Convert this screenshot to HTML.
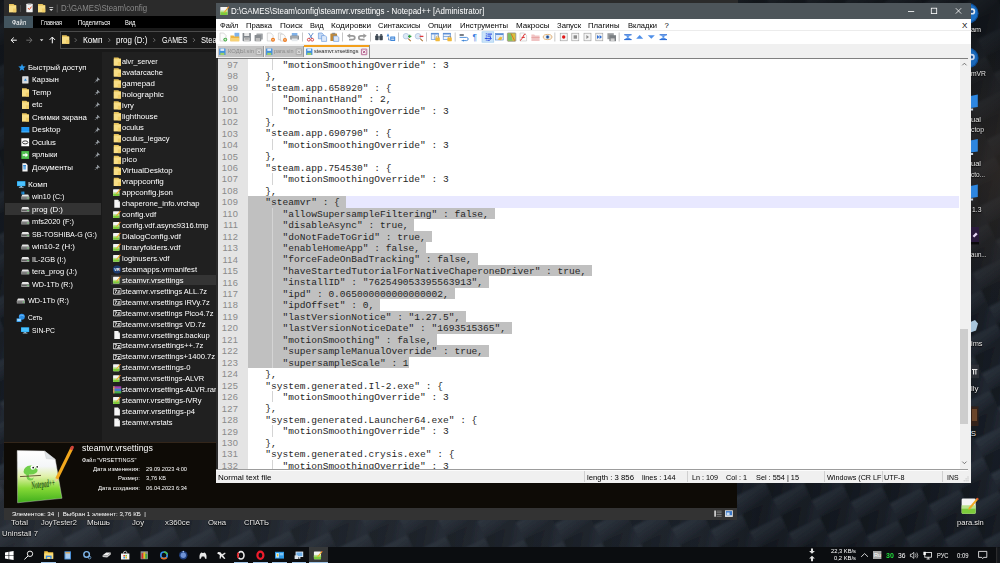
<!DOCTYPE html>
<html><head><meta charset="utf-8"><title>screenshot</title>
<style>
html,body{margin:0;padding:0;}
body{width:1000px;height:563px;overflow:hidden;position:relative;background:#1b2026;font-family:"Liberation Sans",sans-serif;}
.t{position:absolute;white-space:pre;margin:0;padding:0;}
.r{position:absolute;}
.m{font-family:"Liberation Mono",monospace;}
svg.ov{position:absolute;overflow:hidden;pointer-events:none;}
.sh{text-shadow:0 0 1.5px #000,0 0.6px 1px #000;}
</style></head><body>

<svg class="ov" width="1000" height="563" viewBox="0 0 1000 563" style="left:0;top:0;">
<defs>
<linearGradient id="dgA" x1="0" y1="0" x2="0.3" y2="1"><stop offset="0" stop-color="#303843"/><stop offset="0.6" stop-color="#252c36"/><stop offset="1" stop-color="#1c222a"/></linearGradient>
<linearGradient id="dgB" x1="0" y1="0" x2="1" y2="0.4"><stop offset="0" stop-color="#141920"/><stop offset="0.7" stop-color="#1b212a"/><stop offset="1" stop-color="#232a34"/></linearGradient>
<pattern id="weave" width="2" height="2" patternUnits="userSpaceOnUse" patternTransform="matrix(31,-15.5,8,17,3,2)">
<rect x="0" y="0" width="1" height="1" fill="url(#dgA)"/><rect x="1" y="1" width="1" height="1" fill="url(#dgA)"/>
<rect x="1" y="0" width="1" height="1" fill="url(#dgB)"/><rect x="0" y="1" width="1" height="1" fill="url(#dgB)"/>
</pattern>
<linearGradient id="dshade" x1="0" y1="0" x2="0" y2="1"><stop offset="0" stop-color="#0c0e10" stop-opacity="0.6"/><stop offset="0.35" stop-color="#0c0e10" stop-opacity="0.35"/><stop offset="0.8" stop-color="#0c0e10" stop-opacity="0.05"/><stop offset="1" stop-color="#0c0e10" stop-opacity="0.15"/></linearGradient>
<linearGradient id="dlite" x1="0" y1="0" x2="1" y2="0"><stop offset="0" stop-color="#4a4e55" stop-opacity="0.28"/><stop offset="0.7" stop-color="#3a4048" stop-opacity="0.12"/><stop offset="0.76" stop-color="#000" stop-opacity="0.12"/><stop offset="1" stop-color="#000" stop-opacity="0.05"/></linearGradient>
</defs>
<filter id="dblur" x="0" y="0" width="1" height="1"><feGaussianBlur stdDeviation="0.9"/></filter><rect x="-5" y="-5" width="1010" height="573" fill="url(#weave)" filter="url(#dblur)"/>
<rect width="1000" height="563" fill="url(#dshade)"/>
<rect y="480" width="1000" height="83" fill="url(#dlite)"/>
<radialGradient id="dbrown" cx="1" cy="0.36" r="0.3"><stop offset="0" stop-color="#3a3028" stop-opacity="0.55"/><stop offset="1" stop-color="#3a3028" stop-opacity="0"/></radialGradient><rect x="700" width="300" height="480" fill="url(#dbrown)"/>
</svg>

<div class="t sh" style="left:11px;top:518.32px;font-size:7.8px;line-height:9.36px;color:#e8e8e8;transform:scaleX(1.0318);transform-origin:0 0;">Total</div>
<div class="t sh" style="left:41px;top:518.32px;font-size:7.8px;line-height:9.36px;color:#e8e8e8;transform:scaleX(0.9545);transform-origin:0 0;">JoyTester2</div>
<div class="t sh" style="left:87px;top:518.32px;font-size:7.8px;line-height:9.36px;color:#e8e8e8;transform:scaleX(1.0256);transform-origin:0 0;">Мышь</div>
<div class="t sh" style="left:132px;top:518.32px;font-size:7.8px;line-height:9.36px;color:#e8e8e8;transform:scaleX(0.9886);transform-origin:0 0;">Joy</div>
<div class="t sh" style="left:165px;top:518.32px;font-size:7.8px;line-height:9.36px;color:#e8e8e8;transform:scaleX(0.9940);transform-origin:0 0;">x360ce</div>
<div class="t sh" style="left:208px;top:518.32px;font-size:7.8px;line-height:9.36px;color:#e8e8e8;transform:scaleX(0.9931);transform-origin:0 0;">Окна</div>
<div class="t sh" style="left:244px;top:518.32px;font-size:7.8px;line-height:9.36px;color:#e8e8e8;transform:scaleX(0.9722);transform-origin:0 0;">СПАТЬ</div>
<div class="t sh" style="left:2px;top:528.82px;font-size:7.8px;line-height:9.36px;color:#e8e8e8;transform:scaleX(0.9885);transform-origin:0 0;">Uninstall 7</div>
<div class="t sh" style="left:970.8px;top:25.22px;font-size:7.8px;line-height:9.36px;color:#e8e8e8;transform:scaleX(0.9229);transform-origin:0 0;">am</div>
<div class="t sh" style="left:970.8px;top:69.42px;font-size:7.8px;line-height:9.36px;color:#e8e8e8;transform:scaleX(0.8654);transform-origin:0 0;">mVR</div>
<div class="t sh" style="left:970.8px;top:115.42px;font-size:7.8px;line-height:9.36px;color:#e8e8e8;transform:scaleX(0.9607);transform-origin:0 0;">ual</div>
<div class="t sh" style="left:970.8px;top:125.22px;font-size:7.8px;line-height:9.36px;color:#e8e8e8;transform:scaleX(0.8818);transform-origin:0 0;">ctop</div>
<div class="t sh" style="left:970.8px;top:159.42px;font-size:7.8px;line-height:9.36px;color:#e8e8e8;transform:scaleX(0.9607);transform-origin:0 0;">ual</div>
<div class="t sh" style="left:970.8px;top:170.12px;font-size:7.8px;line-height:9.36px;color:#e8e8e8;transform:scaleX(0.8281);transform-origin:0 0;">cto...</div>
<div class="t sh" style="left:971.8px;top:204.52px;font-size:7.8px;line-height:9.36px;color:#e8e8e8;transform:scaleX(0.8669);transform-origin:0 0;">1.3</div>
<div class="t sh" style="left:970.8px;top:250.22px;font-size:7.8px;line-height:9.36px;color:#e8e8e8;transform:scaleX(0.7943);transform-origin:0 0;">aun...</div>
<div class="t sh" style="left:970.8px;top:338.72px;font-size:7.8px;line-height:9.36px;color:#e8e8e8;transform:scaleX(0.9480);transform-origin:0 0;">ims</div>
<div class="t sh" style="left:970.8px;top:383.52px;font-size:7.8px;line-height:9.36px;color:#e8e8e8;transform:scaleX(1.0182);transform-origin:0 0;">lly</div>
<div class="t sh" style="left:970.8px;top:428.62px;font-size:7.8px;line-height:9.36px;color:#e8e8e8;">S</div>
<div class="t sh" style="left:956.5px;top:517.82px;font-size:7.8px;line-height:9.36px;color:#f0f0f0;transform:scaleX(0.9658);transform-origin:0 0;">para.sin</div>
<svg class="ov" width="1000" height="563" viewBox="0 0 1000 563" style="left:0;top:0;"><circle cx="968.40" cy="13.20" r="10.20" fill="#0f4f96" /><circle cx="968.40" cy="13.20" r="9.00" fill="#1a6ec4" /><circle cx="972.00" cy="11.40" r="3.20" fill="#dfe8f2" /><circle cx="972.00" cy="11.40" r="1.50" fill="#1a4f95" /><circle cx="968.40" cy="58.00" r="10.20" fill="#0f4f96" /><circle cx="968.40" cy="58.00" r="9.00" fill="#1a68ba" /><circle cx="971.60" cy="57.00" r="3.20" fill="#c9d6ec" /><circle cx="971.60" cy="57.00" r="1.50" fill="#1a4f95" /><path d="M970.5,96 L977.8,94.5 L977.8,107 L970.5,108 Z" fill="#2d86e0" stroke="none" stroke-width="1" /><path d="M970.5,108.5 h2.6 v2 h-2.6 z" fill="#c8d4e0" stroke="none" stroke-width="1" /><path d="M970.5,140.5 L977.8,139.0 L977.8,151.5 L970.5,152.5 Z" fill="#2d86e0" stroke="none" stroke-width="1" /><path d="M970.5,153.0 h2.6 v2 h-2.6 z" fill="#c8d4e0" stroke="none" stroke-width="1" /><path d="M970.5,186 L977.8,184.5 L977.8,197 L970.5,198 Z" fill="#2d86e0" stroke="none" stroke-width="1" /><path d="M970.5,198.5 h2.6 v2 h-2.6 z" fill="#c8d4e0" stroke="none" stroke-width="1" /><rect x="970.50" y="227.00" width="8.50" height="15.00" fill="#2a1a3c" /><path d="M972.6,236 l3.4,-3.4 l1.6,1.6 l-3.4,3.4 z" fill="#e6d7f5" stroke="none" stroke-width="1" /><rect x="970.50" y="242.00" width="8.50" height="2.40" fill="#0a0a0a" /><path d="M970.5,322 l4.5,-2 l3,3.5 l-2,7 l-5.5,2 z" fill="#a9c6dc" stroke="none" stroke-width="1" /><rect x="970.50" y="364.60" width="8.50" height="13.60" fill="#2c2f36" /><path d="M972,369 h5.4 v1 h-1 v4.6 h-1.1 v-4.6 h-1.2 v4.6 h-1.1 v-4.6 h-1 z" fill="#e6e6e6" stroke="none" stroke-width="1" /><rect x="970.50" y="406.40" width="8.00" height="19.60" fill="#33221a" /><rect x="972.00" y="409.00" width="5.00" height="12.00" fill="#6a452a" /><g transform="translate(961.00,497.20) scale(2.125)"><rect x="0.30" y="0.60" width="6.60" height="7.20" fill="#f4f4f4" rx="0.6"/><rect x="0.30" y="4.60" width="6.60" height="3.20" fill="#7ccb3b" rx="0.5"/><rect x="0.30" y="3.80" width="6.60" height="1.60" fill="#b9e28c" /><path d="M7.6,0.2 L8.3,0.9 L4.4,5.6 L3.4,5.9 L3.7,4.9 Z" fill="#f0a822" stroke="none" stroke-width="1" /><path d="M7.6,0.2 L8.3,0.9 L7.9,1.4 L7.2,0.7 Z" fill="#d8473a" stroke="none" stroke-width="1" /></g></svg>
<div class="r" style="left:4px;top:0px;width:733.2px;height:519.5px;background:#191919;"></div>
<div class="r" style="left:4px;top:0px;width:734.2px;height:16.2px;background:#2b2b2b;"></div>
<div class="r" style="left:4px;top:16.2px;width:733.2px;height:12px;background:#000;"></div>
<div class="r" style="left:4px;top:16.2px;width:29px;height:12px;background:#42545e;"></div>
<div class="t " style="left:11.7px;top:18.66px;font-size:6.4px;line-height:7.68px;color:#fff;transform:scaleX(0.8898);transform-origin:0 0;">Файл</div>
<div class="t " style="left:41px;top:18.66px;font-size:6.4px;line-height:7.68px;color:#fff;transform:scaleX(0.8621);transform-origin:0 0;">Главная</div>
<div class="t " style="left:77.7px;top:18.66px;font-size:6.4px;line-height:7.68px;color:#fff;transform:scaleX(0.9140);transform-origin:0 0;">Поделиться</div>
<div class="t " style="left:125px;top:18.66px;font-size:6.4px;line-height:7.68px;color:#fff;transform:scaleX(0.9069);transform-origin:0 0;">Вид</div>
<div class="t " style="left:61.3px;top:2.90px;font-size:9.0px;line-height:10.80px;color:#8a8a8a;transform:scaleX(0.8684);transform-origin:0 0;">D:\GAMES\Steam\config</div>
<div class="r" style="left:59.5px;top:31.3px;width:700px;height:17.4px;background:#191919;border:0.9px solid #4a4a4a;box-sizing:border-box;"></div>
<div class="t " style="left:82.5px;top:34.96px;font-size:8.4px;line-height:10.08px;color:#fff;transform:scaleX(0.9805);transform-origin:0 0;">Комп</div>
<div class="t " style="left:116px;top:34.96px;font-size:8.4px;line-height:10.08px;color:#fff;transform:scaleX(0.9505);transform-origin:0 0;">prog (D:)</div>
<div class="t " style="left:161.5px;top:34.96px;font-size:8.4px;line-height:10.08px;color:#fff;transform:scaleX(0.8405);transform-origin:0 0;">GAMES</div>
<div class="t " style="left:200.8px;top:34.96px;font-size:8.4px;line-height:10.08px;color:#fff;transform:scaleX(0.9062);transform-origin:0 0;">Steam</div>
<div class="r" style="left:102.3px;top:52.3px;width:640px;height:390px;background:#202020;"></div>
<div class="r" style="left:4.5px;top:203.2px;width:96.5px;height:12px;background:#333;"></div>
<div class="t " style="left:27.5px;top:62.76px;font-size:7.9px;line-height:9.48px;color:#fff;transform:scaleX(0.9750);transform-origin:0 0;">Быстрый доступ</div>
<div class="t " style="left:32px;top:75.26px;font-size:7.9px;line-height:9.48px;color:#fff;transform:scaleX(1.0014);transform-origin:0 0;">Карзын</div>
<div class="t " style="left:32px;top:87.76px;font-size:7.9px;line-height:9.48px;color:#fff;transform:scaleX(0.9835);transform-origin:0 0;">Temp</div>
<div class="t " style="left:32px;top:100.26px;font-size:7.9px;line-height:9.48px;color:#fff;transform:scaleX(0.9963);transform-origin:0 0;">etc</div>
<div class="t " style="left:32px;top:112.76px;font-size:7.9px;line-height:9.48px;color:#fff;transform:scaleX(0.9999);transform-origin:0 0;">Снимки экрана</div>
<div class="t " style="left:32px;top:125.26px;font-size:7.9px;line-height:9.48px;color:#fff;transform:scaleX(0.9834);transform-origin:0 0;">Desktop</div>
<div class="t " style="left:32px;top:137.76px;font-size:7.9px;line-height:9.48px;color:#fff;transform:scaleX(0.9761);transform-origin:0 0;">Oculus</div>
<div class="t " style="left:32px;top:150.26px;font-size:7.9px;line-height:9.48px;color:#fff;transform:scaleX(0.9601);transform-origin:0 0;">ярлыки</div>
<div class="t " style="left:32px;top:162.76px;font-size:7.9px;line-height:9.48px;color:#fff;transform:scaleX(1.0068);transform-origin:0 0;">Документы</div>
<div class="t " style="left:27.5px;top:179.76px;font-size:7.9px;line-height:9.48px;color:#fff;transform:scaleX(1.0425);transform-origin:0 0;">Комп</div>
<div class="t " style="left:32px;top:192.26px;font-size:7.9px;line-height:9.48px;color:#fff;transform:scaleX(0.9028);transform-origin:0 0;">win10 (C:)</div>
<div class="t " style="left:32px;top:204.76px;font-size:7.9px;line-height:9.48px;color:#fff;transform:scaleX(0.9946);transform-origin:0 0;">prog (D:)</div>
<div class="t " style="left:32px;top:217.26px;font-size:7.9px;line-height:9.48px;color:#fff;transform:scaleX(0.9380);transform-origin:0 0;">mfs2020 (F:)</div>
<div class="t " style="left:32px;top:229.76px;font-size:7.9px;line-height:9.48px;color:#fff;transform:scaleX(0.8993);transform-origin:0 0;">SB-TOSHIBA-G (G:)</div>
<div class="t " style="left:32px;top:242.26px;font-size:7.9px;line-height:9.48px;color:#fff;transform:scaleX(0.9995);transform-origin:0 0;">win10-2 (H:)</div>
<div class="t " style="left:32px;top:254.76px;font-size:7.9px;line-height:9.48px;color:#fff;transform:scaleX(0.9221);transform-origin:0 0;">IL-2GB (I:)</div>
<div class="t " style="left:32px;top:267.26px;font-size:7.9px;line-height:9.48px;color:#fff;transform:scaleX(0.9490);transform-origin:0 0;">tera_prog (J:)</div>
<div class="t " style="left:32px;top:279.76px;font-size:7.9px;line-height:9.48px;color:#fff;transform:scaleX(0.9160);transform-origin:0 0;">WD-1Tb (R:)</div>
<div class="t " style="left:27.5px;top:296.26px;font-size:7.9px;line-height:9.48px;color:#fff;transform:scaleX(0.9160);transform-origin:0 0;">WD-1Tb (R:)</div>
<div class="t " style="left:27.5px;top:313.26px;font-size:7.9px;line-height:9.48px;color:#fff;transform:scaleX(0.8252);transform-origin:0 0;">Сеть</div>
<div class="t " style="left:32px;top:325.76px;font-size:7.9px;line-height:9.48px;color:#fff;transform:scaleX(0.8590);transform-origin:0 0;">SIN-PC</div>
<div class="r" style="left:111.3px;top:275.1px;width:110px;height:10.4px;background:#343434;"></div>
<div class="t " style="left:122.4px;top:57.02px;font-size:7.8px;line-height:9.36px;color:#fff;transform:scaleX(0.9228);transform-origin:0 0;">alvr_server</div>
<div class="t " style="left:122.4px;top:67.96px;font-size:7.8px;line-height:9.36px;color:#fff;transform:scaleX(0.9649);transform-origin:0 0;">avatarcache</div>
<div class="t " style="left:122.4px;top:78.90px;font-size:7.8px;line-height:9.36px;color:#fff;transform:scaleX(1.0084);transform-origin:0 0;">gamepad</div>
<div class="t " style="left:122.4px;top:89.84px;font-size:7.8px;line-height:9.36px;color:#fff;transform:scaleX(1.0365);transform-origin:0 0;">holographic</div>
<div class="t " style="left:122.4px;top:100.78px;font-size:7.8px;line-height:9.36px;color:#fff;transform:scaleX(0.9810);transform-origin:0 0;">ivry</div>
<div class="t " style="left:122.4px;top:111.72px;font-size:7.8px;line-height:9.36px;color:#fff;transform:scaleX(1.0067);transform-origin:0 0;">lighthouse</div>
<div class="t " style="left:122.4px;top:122.66px;font-size:7.8px;line-height:9.36px;color:#fff;transform:scaleX(0.9713);transform-origin:0 0;">oculus</div>
<div class="t " style="left:122.4px;top:133.60px;font-size:7.8px;line-height:9.36px;color:#fff;transform:scaleX(0.9609);transform-origin:0 0;">oculus_legacy</div>
<div class="t " style="left:122.4px;top:144.54px;font-size:7.8px;line-height:9.36px;color:#fff;transform:scaleX(1.0021);transform-origin:0 0;">openxr</div>
<div class="t " style="left:122.4px;top:155.48px;font-size:7.8px;line-height:9.36px;color:#fff;transform:scaleX(1.0413);transform-origin:0 0;">pico</div>
<div class="t " style="left:122.4px;top:166.42px;font-size:7.8px;line-height:9.36px;color:#fff;transform:scaleX(1.0023);transform-origin:0 0;">VirtualDesktop</div>
<div class="t " style="left:122.4px;top:177.36px;font-size:7.8px;line-height:9.36px;color:#fff;transform:scaleX(1.0366);transform-origin:0 0;">vrappconfig</div>
<div class="t " style="left:122.4px;top:188.30px;font-size:7.8px;line-height:9.36px;color:#fff;transform:scaleX(1.0138);transform-origin:0 0;">appconfig.json</div>
<div class="t " style="left:122.4px;top:199.24px;font-size:7.8px;line-height:9.36px;color:#fff;transform:scaleX(0.9779);transform-origin:0 0;">chaperone_info.vrchap</div>
<div class="t " style="left:122.4px;top:210.18px;font-size:7.8px;line-height:9.36px;color:#fff;transform:scaleX(1.0274);transform-origin:0 0;">config.vdf</div>
<div class="t " style="left:122.4px;top:221.12px;font-size:7.8px;line-height:9.36px;color:#fff;transform:scaleX(0.9791);transform-origin:0 0;">config.vdf.async9316.tmp</div>
<div class="t " style="left:122.4px;top:232.06px;font-size:7.8px;line-height:9.36px;color:#fff;transform:scaleX(1.0291);transform-origin:0 0;">DialogConfig.vdf</div>
<div class="t " style="left:122.4px;top:243.00px;font-size:7.8px;line-height:9.36px;color:#fff;transform:scaleX(1.0206);transform-origin:0 0;">libraryfolders.vdf</div>
<div class="t " style="left:122.4px;top:253.94px;font-size:7.8px;line-height:9.36px;color:#fff;transform:scaleX(0.9870);transform-origin:0 0;">loginusers.vdf</div>
<div class="t " style="left:122.4px;top:264.88px;font-size:7.8px;line-height:9.36px;color:#fff;transform:scaleX(0.9843);transform-origin:0 0;">steamapps.vrmanifest</div>
<div class="t " style="left:122.4px;top:275.82px;font-size:7.8px;line-height:9.36px;color:#fff;transform:scaleX(0.9816);transform-origin:0 0;">steamvr.vrsettings</div>
<div class="t " style="left:122.4px;top:286.76px;font-size:7.8px;line-height:9.36px;color:#fff;transform:scaleX(0.9575);transform-origin:0 0;">steamvr.vrsettings ALL.7z</div>
<div class="t " style="left:122.4px;top:297.70px;font-size:7.8px;line-height:9.36px;color:#fff;transform:scaleX(0.9661);transform-origin:0 0;">steamvr.vrsettings iRVy.7z</div>
<div class="t " style="left:122.4px;top:308.64px;font-size:7.8px;line-height:9.36px;color:#fff;transform:scaleX(0.9638);transform-origin:0 0;">steamvr.vrsettings Pico4.7z</div>
<div class="t " style="left:122.4px;top:319.58px;font-size:7.8px;line-height:9.36px;color:#fff;transform:scaleX(0.9680);transform-origin:0 0;">steamvr.vrsettings VD.7z</div>
<div class="t " style="left:122.4px;top:330.52px;font-size:7.8px;line-height:9.36px;color:#fff;transform:scaleX(0.9737);transform-origin:0 0;">steamvr.vrsettings.backup</div>
<div class="t " style="left:122.4px;top:341.46px;font-size:7.8px;line-height:9.36px;color:#fff;transform:scaleX(0.9882);transform-origin:0 0;">steamvr.vrsettings++.7z</div>
<div class="t " style="left:122.4px;top:352.40px;font-size:7.8px;line-height:9.36px;color:#fff;transform:scaleX(0.9793);transform-origin:0 0;">steamvr.vrsettings+1400.7z</div>
<div class="t " style="left:122.4px;top:363.34px;font-size:7.8px;line-height:9.36px;color:#fff;transform:scaleX(0.9830);transform-origin:0 0;">steamvr.vrsettings-0</div>
<div class="t " style="left:122.4px;top:374.28px;font-size:7.8px;line-height:9.36px;color:#fff;transform:scaleX(0.9631);transform-origin:0 0;">steamvr.vrsettings-ALVR</div>
<div class="t " style="left:122.4px;top:385.22px;font-size:7.8px;line-height:9.36px;color:#fff;transform:scaleX(0.9747);transform-origin:0 0;">steamvr.vrsettings-ALVR.rar</div>
<div class="t " style="left:122.4px;top:396.16px;font-size:7.8px;line-height:9.36px;color:#fff;transform:scaleX(0.9705);transform-origin:0 0;">steamvr.vrsettings-iVRy</div>
<div class="t " style="left:122.4px;top:407.10px;font-size:7.8px;line-height:9.36px;color:#fff;transform:scaleX(0.9861);transform-origin:0 0;">steamvr.vrsettings-p4</div>
<div class="t " style="left:122.4px;top:418.04px;font-size:7.8px;line-height:9.36px;color:#fff;transform:scaleX(0.9629);transform-origin:0 0;">steamvr.vrstats</div>
<div class="r" style="left:4px;top:442.3px;width:733.2px;height:66.2px;background:#0e0b06;"></div>
<div class="r" style="left:4px;top:442.3px;width:733.2px;height:0.8px;background:#33261a;"></div>
<div class="r" style="left:4px;top:507.5px;width:733.2px;height:12px;background:#333333;"></div>
<div class="t " style="left:82px;top:442.36px;font-size:9.4px;line-height:11.28px;color:#fff;transform:scaleX(0.9373);transform-origin:0 0;">steamvr.vrsettings</div>
<div class="t " style="left:82px;top:455.54px;font-size:6.1px;line-height:7.32px;color:#fff;transform:scaleX(0.9083);transform-origin:0 0;">Файл "VRSETTINGS"</div>
<div class="t " style="left:93px;top:464.94px;font-size:6.1px;line-height:7.32px;color:#fff;transform:scaleX(0.9889);transform-origin:0 0;">Дата изменения:</div>
<div class="t " style="left:146px;top:464.94px;font-size:6.1px;line-height:7.32px;color:#fff;transform:scaleX(0.9298);transform-origin:0 0;">29.09.2023 4:00</div>
<div class="t " style="left:118px;top:474.34px;font-size:6.1px;line-height:7.32px;color:#fff;transform:scaleX(0.9708);transform-origin:0 0;">Размер:</div>
<div class="t " style="left:146px;top:474.34px;font-size:6.1px;line-height:7.32px;color:#fff;transform:scaleX(0.9468);transform-origin:0 0;">3,76 КБ</div>
<div class="t " style="left:98px;top:483.94px;font-size:6.1px;line-height:7.32px;color:#fff;transform:scaleX(0.9760);transform-origin:0 0;">Дата создания:</div>
<div class="t " style="left:146px;top:483.94px;font-size:6.1px;line-height:7.32px;color:#fff;transform:scaleX(0.9298);transform-origin:0 0;">06.04.2023 6:34</div>
<div class="t " style="left:11.5px;top:510.04px;font-size:6.1px;line-height:7.32px;color:#fff;transform:scaleX(1.0149);transform-origin:0 0;">Элементов: 34  |  Выбран 1 элемент: 3,76 КБ  |</div>
<svg class="ov" width="1000" height="563" viewBox="0 0 1000 563" style="left:0;top:0;"><g transform="translate(9.00,4.00) scale(1)"><path d="M0,0 H4.464 L5.6160000000000005,0.9839999999999999 H7.2 V8.2 H0 Z" fill="#e8c45c" stroke="none" stroke-width="1" /><path d="M0,1.64 H7.2 V8.2 H0 Z" fill="#f8de86" stroke="none" stroke-width="1" /><path d="M3.9600000000000004,4.51 H7.2 V8.2 H3.9600000000000004 Z" fill="#f1cf6a" stroke="none" stroke-width="1" /></g><rect x="20.00" y="5.00" width="0.70" height="7.00" fill="#555" /><rect x="26.30" y="3.80" width="6.40" height="8.40" fill="#f2f2f2" rx="0.5"/><path d="M28,8 l1.3,1.6 l2.2,-3" fill="none" stroke="#e2552e" stroke-width="1.0" /><rect x="27.80" y="3.30" width="3.40" height="1.20" fill="#8a8a8a" /><g transform="translate(38.00,4.00) scale(1)"><path d="M0,0 H4.464 L5.6160000000000005,0.9839999999999999 H7.2 V8.2 H0 Z" fill="#e8c45c" stroke="none" stroke-width="1" /><path d="M0,1.64 H7.2 V8.2 H0 Z" fill="#f8de86" stroke="none" stroke-width="1" /><path d="M3.9600000000000004,4.51 H7.2 V8.2 H3.9600000000000004 Z" fill="#f1cf6a" stroke="none" stroke-width="1" /></g><rect x="49.20" y="7.20" width="4.00" height="0.80" fill="#ddd" /><path d="M49.2,9 h4 l-2,2 z" fill="#ddd" stroke="none" stroke-width="1" /><rect x="56.80" y="4.50" width="0.70" height="8.00" fill="#666" /><path d="M16.8,40.2 H11.2 M13.8,37.5 L11.1,40.2 L13.8,42.9" fill="none" stroke="#fff" stroke-width="1.0" /><path d="M26.3,40.2 H31.9 M29.3,37.5 L32,40.2 L29.3,42.9" fill="none" stroke="#6f6f6f" stroke-width="1.0" /><path d="M39.8,39.3 h3.6 l-1.8,1.9 z" fill="#ddd" stroke="none" stroke-width="1" /><path d="M52.3,43.3 V37.2 M49.6,39.9 L52.3,37.1 L55,39.9" fill="none" stroke="#fff" stroke-width="1.0" /><g transform="translate(62.00,35.30) scale(1)"><path d="M0,0 H4.464 L5.6160000000000005,1.008 H7.2 V8.4 H0 Z" fill="#e8c45c" stroke="none" stroke-width="1" /><path d="M0,1.6800000000000002 H7.2 V8.4 H0 Z" fill="#f8de86" stroke="none" stroke-width="1" /><path d="M3.9600000000000004,4.620000000000001 H7.2 V8.4 H3.9600000000000004 Z" fill="#f1cf6a" stroke="none" stroke-width="1" /></g><path d="M74.7,38.2 l1.9,1.9 l-1.9,1.9" fill="none" stroke="#8d8d8d" stroke-width="0.7" /><path d="M108.3,38.2 l1.9,1.9 l-1.9,1.9" fill="none" stroke="#8d8d8d" stroke-width="0.7" /><path d="M153.3,38.2 l1.9,1.9 l-1.9,1.9" fill="none" stroke="#8d8d8d" stroke-width="0.7" /><path d="M193,38.2 l1.9,1.9 l-1.9,1.9" fill="none" stroke="#8d8d8d" stroke-width="0.7" /><g transform="translate(18.00,63.70) scale(1)"><polygon points="4.00,0.10 5.00,2.62 7.71,2.79 5.62,4.53 6.29,7.16 4.00,5.70 1.71,7.16 2.38,4.53 0.29,2.79 3.00,2.62" fill="#2b9bf1"/></g><rect x="22.20" y="76.20" width="6.30" height="7.40" fill="#e9e9e9" rx="0.6"/><rect x="23.20" y="77.20" width="4.30" height="5.40" fill="#cfd6dc" /><path d="M24,80.8 l1.4,-2.2 l1.4,2.2 z" fill="#2b86d9" stroke="none" stroke-width="1" /><g transform="translate(22.00,88.20) scale(1)"><path d="M0,0 H4.34 L5.46,0.9839999999999999 H7 V8.2 H0 Z" fill="#e8c45c" stroke="none" stroke-width="1" /><path d="M0,1.64 H7 V8.2 H0 Z" fill="#f8de86" stroke="none" stroke-width="1" /><path d="M3.8500000000000005,4.51 H7 V8.2 H3.8500000000000005 Z" fill="#f1cf6a" stroke="none" stroke-width="1" /></g><g transform="translate(22.00,100.70) scale(1)"><path d="M0,0 H4.34 L5.46,0.9839999999999999 H7 V8.2 H0 Z" fill="#e8c45c" stroke="none" stroke-width="1" /><path d="M0,1.64 H7 V8.2 H0 Z" fill="#f8de86" stroke="none" stroke-width="1" /><path d="M3.8500000000000005,4.51 H7 V8.2 H3.8500000000000005 Z" fill="#f1cf6a" stroke="none" stroke-width="1" /></g><g transform="translate(22.00,113.20) scale(1)"><path d="M0,0 H4.34 L5.46,0.9839999999999999 H7 V8.2 H0 Z" fill="#e8c45c" stroke="none" stroke-width="1" /><path d="M0,1.64 H7 V8.2 H0 Z" fill="#f8de86" stroke="none" stroke-width="1" /><path d="M3.8500000000000005,4.51 H7 V8.2 H3.8500000000000005 Z" fill="#f1cf6a" stroke="none" stroke-width="1" /></g><rect x="21.30" y="127.00" width="8.00" height="5.20" fill="#1e97f3" /><rect x="21.30" y="131.60" width="8.00" height="0.80" fill="#5cc0ff" /><rect x="21.30" y="138.30" width="7.80" height="8.00" fill="#fff" rx="0.4"/><ellipse cx="25.2" cy="142.4" rx="2.7" ry="1.5" fill="none" stroke="#222" stroke-width="0.9"/><rect x="21.30" y="151.00" width="7.80" height="8.00" fill="#3fae3f" rx="0.5"/><rect x="21.90" y="151.60" width="6.60" height="6.80" fill="#52c152" /><path d="M22.7,154.3 h2.8 v-1.5 l2.6,2.2 l-2.6,2.2 v-1.5 h-2.8 z" fill="#fff" stroke="none" stroke-width="1" /><path d="M22.4,163.3 h3.6 l1.6,1.6 v6.6 h-5.2 z" fill="#f4f4f4" stroke="none" stroke-width="1" /><rect x="23.30" y="165.00" width="2.60" height="4.50" fill="#6fb2e8" /><rect x="23.30" y="165.00" width="2.60" height="1.20" fill="#2f86d4" /><g transform="translate(17.00,181.20) scale(1)"><rect x="0.00" y="0.00" width="8.40" height="4.91" fill="#28a8f2" /><rect x="0.50" y="0.50" width="7.40" height="3.91" fill="#4cc3ff" /><rect x="3.36" y="4.91" width="1.68" height="0.88" fill="#9ad7ff" /><rect x="1.85" y="5.67" width="4.70" height="0.76" fill="#bfe4fb" /></g><g transform="translate(21.20,194.60) scale(1)"><path d="M1.2,0 H7 L8.2,2.2 H0 Z" fill="#e4e4e4" stroke="none" stroke-width="1" /><rect x="0.00" y="2.20" width="8.20" height="2.60" fill="#9a9a9a" rx="0.5"/><rect x="0.60" y="3.00" width="5.00" height="0.90" fill="#5a5a5a" /><rect x="6.30" y="3.00" width="1.10" height="0.90" fill="#3fd24a" /><rect x="0.20" y="-3.00" width="1.40" height="1.30" fill="#1f9cf0" /><rect x="1.80" y="-3.00" width="1.40" height="1.30" fill="#1f9cf0" /><rect x="0.20" y="-1.50" width="1.40" height="1.30" fill="#1f9cf0" /><rect x="1.80" y="-1.50" width="1.40" height="1.30" fill="#1f9cf0" /></g><g transform="translate(21.20,207.10) scale(1)"><path d="M1.2,0 H7 L8.2,2.2 H0 Z" fill="#e4e4e4" stroke="none" stroke-width="1" /><rect x="0.00" y="2.20" width="8.20" height="2.60" fill="#9a9a9a" rx="0.5"/><rect x="0.60" y="3.00" width="5.00" height="0.90" fill="#5a5a5a" /><rect x="6.30" y="3.00" width="1.10" height="0.90" fill="#3fd24a" /></g><g transform="translate(21.20,219.60) scale(1)"><path d="M1.2,0 H7 L8.2,2.2 H0 Z" fill="#e4e4e4" stroke="none" stroke-width="1" /><rect x="0.00" y="2.20" width="8.20" height="2.60" fill="#9a9a9a" rx="0.5"/><rect x="0.60" y="3.00" width="5.00" height="0.90" fill="#5a5a5a" /><rect x="6.30" y="3.00" width="1.10" height="0.90" fill="#3fd24a" /></g><g transform="translate(21.20,232.10) scale(1)"><path d="M1.2,0 H7 L8.2,2.2 H0 Z" fill="#e4e4e4" stroke="none" stroke-width="1" /><rect x="0.00" y="2.20" width="8.20" height="2.60" fill="#9a9a9a" rx="0.5"/><rect x="0.60" y="3.00" width="5.00" height="0.90" fill="#5a5a5a" /><rect x="6.30" y="3.00" width="1.10" height="0.90" fill="#3fd24a" /></g><g transform="translate(21.20,244.60) scale(1)"><path d="M1.2,0 H7 L8.2,2.2 H0 Z" fill="#e4e4e4" stroke="none" stroke-width="1" /><rect x="0.00" y="2.20" width="8.20" height="2.60" fill="#9a9a9a" rx="0.5"/><rect x="0.60" y="3.00" width="5.00" height="0.90" fill="#5a5a5a" /><rect x="6.30" y="3.00" width="1.10" height="0.90" fill="#3fd24a" /></g><g transform="translate(21.20,257.10) scale(1)"><path d="M1.2,0 H7 L8.2,2.2 H0 Z" fill="#e4e4e4" stroke="none" stroke-width="1" /><rect x="0.00" y="2.20" width="8.20" height="2.60" fill="#9a9a9a" rx="0.5"/><rect x="0.60" y="3.00" width="5.00" height="0.90" fill="#5a5a5a" /><rect x="6.30" y="3.00" width="1.10" height="0.90" fill="#3fd24a" /></g><g transform="translate(21.20,269.60) scale(1)"><path d="M1.2,0 H7 L8.2,2.2 H0 Z" fill="#e4e4e4" stroke="none" stroke-width="1" /><rect x="0.00" y="2.20" width="8.20" height="2.60" fill="#9a9a9a" rx="0.5"/><rect x="0.60" y="3.00" width="5.00" height="0.90" fill="#5a5a5a" /><rect x="6.30" y="3.00" width="1.10" height="0.90" fill="#3fd24a" /></g><g transform="translate(21.20,282.10) scale(1)"><path d="M1.2,0 H7 L8.2,2.2 H0 Z" fill="#e4e4e4" stroke="none" stroke-width="1" /><rect x="0.00" y="2.20" width="8.20" height="2.60" fill="#9a9a9a" rx="0.5"/><rect x="0.60" y="3.00" width="5.00" height="0.90" fill="#5a5a5a" /><rect x="6.30" y="3.00" width="1.10" height="0.90" fill="#3fd24a" /></g><g transform="translate(16.80,298.60) scale(1)"><path d="M1.2,0 H7 L8.2,2.2 H0 Z" fill="#e4e4e4" stroke="none" stroke-width="1" /><rect x="0.00" y="2.20" width="8.20" height="2.60" fill="#9a9a9a" rx="0.5"/><rect x="0.60" y="3.00" width="5.00" height="0.90" fill="#5a5a5a" /><rect x="6.30" y="3.00" width="1.10" height="0.90" fill="#3fd24a" /></g><circle cx="21.80" cy="316.80" r="3.00" fill="#2b8fe6" /><path d="M19.2,316.2 q2.6,-2 5.2,0" fill="none" stroke="#8fd0ff" stroke-width="0.6" /><rect x="16.60" y="318.40" width="4.80" height="3.60" fill="#3aa0ee" /><rect x="17.20" y="318.90" width="3.60" height="2.10" fill="#9ad7ff" /><g transform="translate(21.00,327.30) scale(1)"><rect x="0.00" y="0.00" width="8.20" height="4.68" fill="#28a8f2" /><rect x="0.50" y="0.50" width="7.20" height="3.68" fill="#4cc3ff" /><rect x="3.28" y="4.68" width="1.64" height="0.84" fill="#9ad7ff" /><rect x="1.80" y="5.40" width="4.59" height="0.72" fill="#bfe4fb" /></g><g transform="translate(94.80,77.30) scale(1)"><path d="M2.6,0 L5.2,2.6 L4.4,3.0 L3.6,2.7 L2.6,3.9 L2.9,4.9 L0.3,2.3 L1.3,2.6 L2.5,1.6 L2.2,0.8 Z" fill="#9aa0a6" stroke="none" stroke-width="1" /><path d="M1.5,3.7 L0,5.2" fill="none" stroke="#9aa0a6" stroke-width="0.6" /></g><g transform="translate(94.80,89.80) scale(1)"><path d="M2.6,0 L5.2,2.6 L4.4,3.0 L3.6,2.7 L2.6,3.9 L2.9,4.9 L0.3,2.3 L1.3,2.6 L2.5,1.6 L2.2,0.8 Z" fill="#9aa0a6" stroke="none" stroke-width="1" /><path d="M1.5,3.7 L0,5.2" fill="none" stroke="#9aa0a6" stroke-width="0.6" /></g><g transform="translate(94.80,102.30) scale(1)"><path d="M2.6,0 L5.2,2.6 L4.4,3.0 L3.6,2.7 L2.6,3.9 L2.9,4.9 L0.3,2.3 L1.3,2.6 L2.5,1.6 L2.2,0.8 Z" fill="#9aa0a6" stroke="none" stroke-width="1" /><path d="M1.5,3.7 L0,5.2" fill="none" stroke="#9aa0a6" stroke-width="0.6" /></g><g transform="translate(94.80,114.80) scale(1)"><path d="M2.6,0 L5.2,2.6 L4.4,3.0 L3.6,2.7 L2.6,3.9 L2.9,4.9 L0.3,2.3 L1.3,2.6 L2.5,1.6 L2.2,0.8 Z" fill="#9aa0a6" stroke="none" stroke-width="1" /><path d="M1.5,3.7 L0,5.2" fill="none" stroke="#9aa0a6" stroke-width="0.6" /></g><g transform="translate(94.80,127.30) scale(1)"><path d="M2.6,0 L5.2,2.6 L4.4,3.0 L3.6,2.7 L2.6,3.9 L2.9,4.9 L0.3,2.3 L1.3,2.6 L2.5,1.6 L2.2,0.8 Z" fill="#9aa0a6" stroke="none" stroke-width="1" /><path d="M1.5,3.7 L0,5.2" fill="none" stroke="#9aa0a6" stroke-width="0.6" /></g><g transform="translate(94.80,139.80) scale(1)"><path d="M2.6,0 L5.2,2.6 L4.4,3.0 L3.6,2.7 L2.6,3.9 L2.9,4.9 L0.3,2.3 L1.3,2.6 L2.5,1.6 L2.2,0.8 Z" fill="#9aa0a6" stroke="none" stroke-width="1" /><path d="M1.5,3.7 L0,5.2" fill="none" stroke="#9aa0a6" stroke-width="0.6" /></g><g transform="translate(94.80,152.30) scale(1)"><path d="M2.6,0 L5.2,2.6 L4.4,3.0 L3.6,2.7 L2.6,3.9 L2.9,4.9 L0.3,2.3 L1.3,2.6 L2.5,1.6 L2.2,0.8 Z" fill="#9aa0a6" stroke="none" stroke-width="1" /><path d="M1.5,3.7 L0,5.2" fill="none" stroke="#9aa0a6" stroke-width="0.6" /></g><g transform="translate(94.80,164.80) scale(1)"><path d="M2.6,0 L5.2,2.6 L4.4,3.0 L3.6,2.7 L2.6,3.9 L2.9,4.9 L0.3,2.3 L1.3,2.6 L2.5,1.6 L2.2,0.8 Z" fill="#9aa0a6" stroke="none" stroke-width="1" /><path d="M1.5,3.7 L0,5.2" fill="none" stroke="#9aa0a6" stroke-width="0.6" /></g><g transform="translate(113.80,57.40) scale(1)"><path d="M0,0 H4.464 L5.6160000000000005,0.9839999999999999 H7.2 V8.2 H0 Z" fill="#e8c45c" stroke="none" stroke-width="1" /><path d="M0,1.64 H7.2 V8.2 H0 Z" fill="#f8de86" stroke="none" stroke-width="1" /><path d="M3.9600000000000004,4.51 H7.2 V8.2 H3.9600000000000004 Z" fill="#f1cf6a" stroke="none" stroke-width="1" /></g><g transform="translate(113.80,68.34) scale(1)"><path d="M0,0 H4.464 L5.6160000000000005,0.9839999999999999 H7.2 V8.2 H0 Z" fill="#e8c45c" stroke="none" stroke-width="1" /><path d="M0,1.64 H7.2 V8.2 H0 Z" fill="#f8de86" stroke="none" stroke-width="1" /><path d="M3.9600000000000004,4.51 H7.2 V8.2 H3.9600000000000004 Z" fill="#f1cf6a" stroke="none" stroke-width="1" /></g><g transform="translate(113.80,79.28) scale(1)"><path d="M0,0 H4.464 L5.6160000000000005,0.9839999999999999 H7.2 V8.2 H0 Z" fill="#e8c45c" stroke="none" stroke-width="1" /><path d="M0,1.64 H7.2 V8.2 H0 Z" fill="#f8de86" stroke="none" stroke-width="1" /><path d="M3.9600000000000004,4.51 H7.2 V8.2 H3.9600000000000004 Z" fill="#f1cf6a" stroke="none" stroke-width="1" /></g><g transform="translate(113.80,90.22) scale(1)"><path d="M0,0 H4.464 L5.6160000000000005,0.9839999999999999 H7.2 V8.2 H0 Z" fill="#e8c45c" stroke="none" stroke-width="1" /><path d="M0,1.64 H7.2 V8.2 H0 Z" fill="#f8de86" stroke="none" stroke-width="1" /><path d="M3.9600000000000004,4.51 H7.2 V8.2 H3.9600000000000004 Z" fill="#f1cf6a" stroke="none" stroke-width="1" /></g><g transform="translate(113.80,101.16) scale(1)"><path d="M0,0 H4.464 L5.6160000000000005,0.9839999999999999 H7.2 V8.2 H0 Z" fill="#e8c45c" stroke="none" stroke-width="1" /><path d="M0,1.64 H7.2 V8.2 H0 Z" fill="#f8de86" stroke="none" stroke-width="1" /><path d="M3.9600000000000004,4.51 H7.2 V8.2 H3.9600000000000004 Z" fill="#f1cf6a" stroke="none" stroke-width="1" /></g><g transform="translate(113.80,112.10) scale(1)"><path d="M0,0 H4.464 L5.6160000000000005,0.9839999999999999 H7.2 V8.2 H0 Z" fill="#e8c45c" stroke="none" stroke-width="1" /><path d="M0,1.64 H7.2 V8.2 H0 Z" fill="#f8de86" stroke="none" stroke-width="1" /><path d="M3.9600000000000004,4.51 H7.2 V8.2 H3.9600000000000004 Z" fill="#f1cf6a" stroke="none" stroke-width="1" /></g><g transform="translate(113.80,123.04) scale(1)"><path d="M0,0 H4.464 L5.6160000000000005,0.9839999999999999 H7.2 V8.2 H0 Z" fill="#e8c45c" stroke="none" stroke-width="1" /><path d="M0,1.64 H7.2 V8.2 H0 Z" fill="#f8de86" stroke="none" stroke-width="1" /><path d="M3.9600000000000004,4.51 H7.2 V8.2 H3.9600000000000004 Z" fill="#f1cf6a" stroke="none" stroke-width="1" /></g><g transform="translate(113.80,133.98) scale(1)"><path d="M0,0 H4.464 L5.6160000000000005,0.9839999999999999 H7.2 V8.2 H0 Z" fill="#e8c45c" stroke="none" stroke-width="1" /><path d="M0,1.64 H7.2 V8.2 H0 Z" fill="#f8de86" stroke="none" stroke-width="1" /><path d="M3.9600000000000004,4.51 H7.2 V8.2 H3.9600000000000004 Z" fill="#f1cf6a" stroke="none" stroke-width="1" /></g><g transform="translate(113.80,144.92) scale(1)"><path d="M0,0 H4.464 L5.6160000000000005,0.9839999999999999 H7.2 V8.2 H0 Z" fill="#e8c45c" stroke="none" stroke-width="1" /><path d="M0,1.64 H7.2 V8.2 H0 Z" fill="#f8de86" stroke="none" stroke-width="1" /><path d="M3.9600000000000004,4.51 H7.2 V8.2 H3.9600000000000004 Z" fill="#f1cf6a" stroke="none" stroke-width="1" /></g><g transform="translate(113.80,155.86) scale(1)"><path d="M0,0 H4.464 L5.6160000000000005,0.9839999999999999 H7.2 V8.2 H0 Z" fill="#e8c45c" stroke="none" stroke-width="1" /><path d="M0,1.64 H7.2 V8.2 H0 Z" fill="#f8de86" stroke="none" stroke-width="1" /><path d="M3.9600000000000004,4.51 H7.2 V8.2 H3.9600000000000004 Z" fill="#f1cf6a" stroke="none" stroke-width="1" /></g><g transform="translate(113.80,166.80) scale(1)"><path d="M0,0 H4.464 L5.6160000000000005,0.9839999999999999 H7.2 V8.2 H0 Z" fill="#e8c45c" stroke="none" stroke-width="1" /><path d="M0,1.64 H7.2 V8.2 H0 Z" fill="#f8de86" stroke="none" stroke-width="1" /><path d="M3.9600000000000004,4.51 H7.2 V8.2 H3.9600000000000004 Z" fill="#f1cf6a" stroke="none" stroke-width="1" /></g><g transform="translate(113.80,177.74) scale(1)"><path d="M0,0 H4.464 L5.6160000000000005,0.9839999999999999 H7.2 V8.2 H0 Z" fill="#e8c45c" stroke="none" stroke-width="1" /><path d="M0,1.64 H7.2 V8.2 H0 Z" fill="#f8de86" stroke="none" stroke-width="1" /><path d="M3.9600000000000004,4.51 H7.2 V8.2 H3.9600000000000004 Z" fill="#f1cf6a" stroke="none" stroke-width="1" /></g><g transform="translate(112.80,188.68) scale(0.95)"><rect x="0.30" y="0.60" width="6.60" height="7.20" fill="#f4f4f4" rx="0.6"/><rect x="0.30" y="4.60" width="6.60" height="3.20" fill="#7ccb3b" rx="0.5"/><rect x="0.30" y="3.80" width="6.60" height="1.60" fill="#b9e28c" /><path d="M7.6,0.2 L8.3,0.9 L4.4,5.6 L3.4,5.9 L3.7,4.9 Z" fill="#f0a822" stroke="none" stroke-width="1" /><path d="M7.6,0.2 L8.3,0.9 L7.9,1.4 L7.2,0.7 Z" fill="#d8473a" stroke="none" stroke-width="1" /></g><g transform="translate(114.30,199.72) scale(1)"><path d="M0,0 H3.6399999999999997 L5.6,2.16 V8.0 H0 Z" fill="#f6f6f6" stroke="none" stroke-width="1" /><path d="M3.6399999999999997,0 L5.6,2.16 H3.6399999999999997 Z" fill="#cfcfcf" stroke="none" stroke-width="1" /></g><g transform="translate(112.80,210.56) scale(0.95)"><rect x="0.30" y="0.60" width="6.60" height="7.20" fill="#f4f4f4" rx="0.6"/><rect x="0.30" y="4.60" width="6.60" height="3.20" fill="#7ccb3b" rx="0.5"/><rect x="0.30" y="3.80" width="6.60" height="1.60" fill="#b9e28c" /><path d="M7.6,0.2 L8.3,0.9 L4.4,5.6 L3.4,5.9 L3.7,4.9 Z" fill="#f0a822" stroke="none" stroke-width="1" /><path d="M7.6,0.2 L8.3,0.9 L7.9,1.4 L7.2,0.7 Z" fill="#d8473a" stroke="none" stroke-width="1" /></g><g transform="translate(112.80,221.50) scale(0.95)"><rect x="0.30" y="0.60" width="6.60" height="7.20" fill="#f4f4f4" rx="0.6"/><rect x="0.30" y="4.60" width="6.60" height="3.20" fill="#7ccb3b" rx="0.5"/><rect x="0.30" y="3.80" width="6.60" height="1.60" fill="#b9e28c" /><path d="M7.6,0.2 L8.3,0.9 L4.4,5.6 L3.4,5.9 L3.7,4.9 Z" fill="#f0a822" stroke="none" stroke-width="1" /><path d="M7.6,0.2 L8.3,0.9 L7.9,1.4 L7.2,0.7 Z" fill="#d8473a" stroke="none" stroke-width="1" /></g><g transform="translate(112.80,232.44) scale(0.95)"><rect x="0.30" y="0.60" width="6.60" height="7.20" fill="#f4f4f4" rx="0.6"/><rect x="0.30" y="4.60" width="6.60" height="3.20" fill="#7ccb3b" rx="0.5"/><rect x="0.30" y="3.80" width="6.60" height="1.60" fill="#b9e28c" /><path d="M7.6,0.2 L8.3,0.9 L4.4,5.6 L3.4,5.9 L3.7,4.9 Z" fill="#f0a822" stroke="none" stroke-width="1" /><path d="M7.6,0.2 L8.3,0.9 L7.9,1.4 L7.2,0.7 Z" fill="#d8473a" stroke="none" stroke-width="1" /></g><g transform="translate(112.80,243.38) scale(0.95)"><rect x="0.30" y="0.60" width="6.60" height="7.20" fill="#f4f4f4" rx="0.6"/><rect x="0.30" y="4.60" width="6.60" height="3.20" fill="#7ccb3b" rx="0.5"/><rect x="0.30" y="3.80" width="6.60" height="1.60" fill="#b9e28c" /><path d="M7.6,0.2 L8.3,0.9 L4.4,5.6 L3.4,5.9 L3.7,4.9 Z" fill="#f0a822" stroke="none" stroke-width="1" /><path d="M7.6,0.2 L8.3,0.9 L7.9,1.4 L7.2,0.7 Z" fill="#d8473a" stroke="none" stroke-width="1" /></g><g transform="translate(112.80,254.32) scale(0.95)"><rect x="0.30" y="0.60" width="6.60" height="7.20" fill="#f4f4f4" rx="0.6"/><rect x="0.30" y="4.60" width="6.60" height="3.20" fill="#7ccb3b" rx="0.5"/><rect x="0.30" y="3.80" width="6.60" height="1.60" fill="#b9e28c" /><path d="M7.6,0.2 L8.3,0.9 L4.4,5.6 L3.4,5.9 L3.7,4.9 Z" fill="#f0a822" stroke="none" stroke-width="1" /><path d="M7.6,0.2 L8.3,0.9 L7.9,1.4 L7.2,0.7 Z" fill="#d8473a" stroke="none" stroke-width="1" /></g><g transform="translate(113.00,265.56) scale(1)"><circle cx="4.00" cy="4.00" r="4.00" fill="#1c3a6e" /><text x="4" y="5.6" font-size="4.2" font-weight="bold" fill="#fff" text-anchor="middle" font-family="Liberation Sans">VR</text></g><g transform="translate(112.80,276.20) scale(0.95)"><rect x="0.30" y="0.60" width="6.60" height="7.20" fill="#f4f4f4" rx="0.6"/><rect x="0.30" y="4.60" width="6.60" height="3.20" fill="#7ccb3b" rx="0.5"/><rect x="0.30" y="3.80" width="6.60" height="1.60" fill="#b9e28c" /><path d="M7.6,0.2 L8.3,0.9 L4.4,5.6 L3.4,5.9 L3.7,4.9 Z" fill="#f0a822" stroke="none" stroke-width="1" /><path d="M7.6,0.2 L8.3,0.9 L7.9,1.4 L7.2,0.7 Z" fill="#d8473a" stroke="none" stroke-width="1" /></g><g transform="translate(113.00,288.24) scale(1)"><rect x="0.00" y="0.00" width="8.40" height="6.20" fill="#f2f2f2" rx="0.8"/><rect x="0.70" y="0.80" width="7.00" height="4.60" fill="#111" /><path d="M1.4,1.7 H3.6 L2.3,4.7" fill="none" stroke="#fff" stroke-width="0.9" /><path d="M4.5,2.6 H6.9 L4.5,4.6 H6.9" fill="none" stroke="#fff" stroke-width="0.8" /></g><g transform="translate(113.00,299.18) scale(1)"><rect x="0.00" y="0.00" width="8.40" height="6.20" fill="#f2f2f2" rx="0.8"/><rect x="0.70" y="0.80" width="7.00" height="4.60" fill="#111" /><path d="M1.4,1.7 H3.6 L2.3,4.7" fill="none" stroke="#fff" stroke-width="0.9" /><path d="M4.5,2.6 H6.9 L4.5,4.6 H6.9" fill="none" stroke="#fff" stroke-width="0.8" /></g><g transform="translate(113.00,310.12) scale(1)"><rect x="0.00" y="0.00" width="8.40" height="6.20" fill="#f2f2f2" rx="0.8"/><rect x="0.70" y="0.80" width="7.00" height="4.60" fill="#111" /><path d="M1.4,1.7 H3.6 L2.3,4.7" fill="none" stroke="#fff" stroke-width="0.9" /><path d="M4.5,2.6 H6.9 L4.5,4.6 H6.9" fill="none" stroke="#fff" stroke-width="0.8" /></g><g transform="translate(113.00,321.06) scale(1)"><rect x="0.00" y="0.00" width="8.40" height="6.20" fill="#f2f2f2" rx="0.8"/><rect x="0.70" y="0.80" width="7.00" height="4.60" fill="#111" /><path d="M1.4,1.7 H3.6 L2.3,4.7" fill="none" stroke="#fff" stroke-width="0.9" /><path d="M4.5,2.6 H6.9 L4.5,4.6 H6.9" fill="none" stroke="#fff" stroke-width="0.8" /></g><g transform="translate(114.30,331.00) scale(1)"><path d="M0,0 H3.6399999999999997 L5.6,2.16 V8.0 H0 Z" fill="#f6f6f6" stroke="none" stroke-width="1" /><path d="M3.6399999999999997,0 L5.6,2.16 H3.6399999999999997 Z" fill="#cfcfcf" stroke="none" stroke-width="1" /></g><g transform="translate(113.00,342.94) scale(1)"><rect x="0.00" y="0.00" width="8.40" height="6.20" fill="#f2f2f2" rx="0.8"/><rect x="0.70" y="0.80" width="7.00" height="4.60" fill="#111" /><path d="M1.4,1.7 H3.6 L2.3,4.7" fill="none" stroke="#fff" stroke-width="0.9" /><path d="M4.5,2.6 H6.9 L4.5,4.6 H6.9" fill="none" stroke="#fff" stroke-width="0.8" /></g><g transform="translate(113.00,353.88) scale(1)"><rect x="0.00" y="0.00" width="8.40" height="6.20" fill="#f2f2f2" rx="0.8"/><rect x="0.70" y="0.80" width="7.00" height="4.60" fill="#111" /><path d="M1.4,1.7 H3.6 L2.3,4.7" fill="none" stroke="#fff" stroke-width="0.9" /><path d="M4.5,2.6 H6.9 L4.5,4.6 H6.9" fill="none" stroke="#fff" stroke-width="0.8" /></g><g transform="translate(112.80,363.72) scale(0.95)"><rect x="0.30" y="0.60" width="6.60" height="7.20" fill="#f4f4f4" rx="0.6"/><rect x="0.30" y="4.60" width="6.60" height="3.20" fill="#7ccb3b" rx="0.5"/><rect x="0.30" y="3.80" width="6.60" height="1.60" fill="#b9e28c" /><path d="M7.6,0.2 L8.3,0.9 L4.4,5.6 L3.4,5.9 L3.7,4.9 Z" fill="#f0a822" stroke="none" stroke-width="1" /><path d="M7.6,0.2 L8.3,0.9 L7.9,1.4 L7.2,0.7 Z" fill="#d8473a" stroke="none" stroke-width="1" /></g><g transform="translate(112.80,374.66) scale(0.95)"><rect x="0.30" y="0.60" width="6.60" height="7.20" fill="#f4f4f4" rx="0.6"/><rect x="0.30" y="4.60" width="6.60" height="3.20" fill="#7ccb3b" rx="0.5"/><rect x="0.30" y="3.80" width="6.60" height="1.60" fill="#b9e28c" /><path d="M7.6,0.2 L8.3,0.9 L4.4,5.6 L3.4,5.9 L3.7,4.9 Z" fill="#f0a822" stroke="none" stroke-width="1" /><path d="M7.6,0.2 L8.3,0.9 L7.9,1.4 L7.2,0.7 Z" fill="#d8473a" stroke="none" stroke-width="1" /></g><g transform="translate(113.00,386.30) scale(1)"><rect x="0.80" y="0.00" width="7.40" height="2.20" fill="#a23fb0" /><rect x="0.80" y="2.50" width="7.40" height="2.10" fill="#3b79d6" /><rect x="0.80" y="4.90" width="7.40" height="2.20" fill="#3fae4a" /><rect x="0.80" y="2.20" width="7.40" height="0.30" fill="#e8e0d0" /><rect x="0.80" y="4.60" width="7.40" height="0.30" fill="#e8e0d0" /><rect x="0.00" y="0.00" width="1.50" height="7.10" fill="#c9a86a" /><rect x="0.40" y="0.80" width="0.70" height="0.70" fill="#d63b3b" /><rect x="0.40" y="3.20" width="0.70" height="0.70" fill="#d63b3b" /><rect x="0.40" y="5.60" width="0.70" height="0.70" fill="#d63b3b" /></g><g transform="translate(112.80,396.54) scale(0.95)"><rect x="0.30" y="0.60" width="6.60" height="7.20" fill="#f4f4f4" rx="0.6"/><rect x="0.30" y="4.60" width="6.60" height="3.20" fill="#7ccb3b" rx="0.5"/><rect x="0.30" y="3.80" width="6.60" height="1.60" fill="#b9e28c" /><path d="M7.6,0.2 L8.3,0.9 L4.4,5.6 L3.4,5.9 L3.7,4.9 Z" fill="#f0a822" stroke="none" stroke-width="1" /><path d="M7.6,0.2 L8.3,0.9 L7.9,1.4 L7.2,0.7 Z" fill="#d8473a" stroke="none" stroke-width="1" /></g><g transform="translate(114.30,407.58) scale(1)"><path d="M0,0 H3.6399999999999997 L5.6,2.16 V8.0 H0 Z" fill="#f6f6f6" stroke="none" stroke-width="1" /><path d="M3.6399999999999997,0 L5.6,2.16 H3.6399999999999997 Z" fill="#cfcfcf" stroke="none" stroke-width="1" /></g><g transform="translate(114.30,418.52) scale(1)"><path d="M0,0 H3.6399999999999997 L5.6,2.16 V8.0 H0 Z" fill="#f6f6f6" stroke="none" stroke-width="1" /><path d="M3.6399999999999997,0 L5.6,2.16 H3.6399999999999997 Z" fill="#cfcfcf" stroke="none" stroke-width="1" /></g><defs><linearGradient id="gpg" x1="0" y1="0" x2="0" y2="1"><stop offset="0" stop-color="#ffffff"/><stop offset="0.3" stop-color="#f4f6f8"/><stop offset="0.5" stop-color="#dff0a6"/><stop offset="0.72" stop-color="#86d936"/><stop offset="1" stop-color="#3fae1c"/></linearGradient></defs><path d="M17.2,450.6 L44.5,451 L55.3,459.4 L62,498.3 L17.6,502.8 Z" fill="url(#gpg)" stroke="#d9d9d9" stroke-width="0.4" /><path d="M44.5,451 L46.2,458.6 L55.3,459.4 Z" fill="#dfe3e6" stroke="#bbb" stroke-width="0.3" /><path d="M23.5,472 q0.5,-6 7,-6.5 q4.5,-0.3 6.5,3 q1.5,2.5 -1,4.5 q-3,2 -7,1.5 q-1,3 2,4 q2,0.5 2.5,-1.5 q0.3,3.5 -3.5,3.5 q-4,-0.5 -3.5,-5.5 q-2.5,-1 -3,-3 z" fill="#6fcf4a" stroke="none" stroke-width="1" /><circle cx="32.80" cy="467.50" r="2.30" fill="#fff" /><circle cx="37.00" cy="466.80" r="1.90" fill="#fff" /><circle cx="33.20" cy="467.60" r="0.90" fill="#111" /><circle cx="37.20" cy="466.90" r="0.80" fill="#111" /><path d="M20,476.6 L41,475.4" fill="none" stroke="#5a4a2a" stroke-width="0.9" /><text x="31.8" y="489" font-size="11" font-weight="bold" fill="#2f5a18" font-family="Liberation Serif" font-style="italic" transform="rotate(-7 32 489)" textLength="23.5" lengthAdjust="spacingAndGlyphs">Notepad++</text><path d="M70.6,447.2 L73.4,448.6 L58.2,479.6 L55.3,478.2 Z" fill="#f2a81d" stroke="none" stroke-width="1" /><path d="M70.6,447.2 L73.4,448.6 L72.5,450.5 L69.7,449.1 Z" fill="#d6453d" stroke="none" stroke-width="1" /><path d="M71,446.3 q1.8,-1.2 3,0.6 l-0.6,1.7 l-2.8,-1.4 z" fill="#d6453d" stroke="none" stroke-width="1" /><path d="M55.3,478.2 L58.2,479.6 L55.2,482.3 Z" fill="#e9cfa0" stroke="none" stroke-width="1" /><rect x="714.30" y="510.50" width="1.60" height="6.20" fill="#ddd" /><rect x="716.60" y="510.70" width="5.00" height="0.80" fill="#8a8a8a" /><rect x="716.60" y="512.40" width="5.00" height="0.80" fill="#8a8a8a" /><rect x="716.60" y="514.10" width="5.00" height="0.80" fill="#8a8a8a" /><rect x="716.60" y="515.80" width="5.00" height="0.80" fill="#8a8a8a" /><rect x="725.00" y="510.30" width="7.80" height="6.60" fill="#e6e6e6" /><rect x="725.80" y="511.10" width="6.20" height="4.20" fill="#3a78c8" /><rect x="726.60" y="512.50" width="3.00" height="2.50" fill="#cfe0f2" /></svg>
<div class="r" style="left:215.5px;top:2.5px;width:755.6px;height:480.6px;background:rgba(0,0,0,0.35);"></div>
<div class="r" style="left:216px;top:3px;width:754.6px;height:479.6px;background:#fff;"></div>
<div class="r" style="left:216px;top:3px;width:754.6px;height:15.9px;background:#4d555a;"></div>
<div class="t " style="left:231px;top:5.93px;font-size:8.45px;line-height:10.14px;color:#fff;transform:scaleX(0.9404);transform-origin:0 0;">D:\GAMES\Steam\config\steamvr.vrsettings - Notepad++ [Administrator]</div>
<div class="t " style="left:219.5px;top:20.95px;font-size:7.75px;line-height:9.30px;color:#000;transform:scaleX(0.9710);transform-origin:0 0;">Файл</div>
<div class="t " style="left:246px;top:20.95px;font-size:7.75px;line-height:9.30px;color:#000;transform:scaleX(0.9932);transform-origin:0 0;">Правка</div>
<div class="t " style="left:280px;top:20.95px;font-size:7.75px;line-height:9.30px;color:#000;transform:scaleX(1.0477);transform-origin:0 0;">Поиск</div>
<div class="t " style="left:309.5px;top:20.95px;font-size:7.75px;line-height:9.30px;color:#000;transform:scaleX(0.9629);transform-origin:0 0;">Вид</div>
<div class="t " style="left:330.5px;top:20.95px;font-size:7.75px;line-height:9.30px;color:#000;transform:scaleX(1.0537);transform-origin:0 0;">Кодировки</div>
<div class="t " style="left:378px;top:20.95px;font-size:7.75px;line-height:9.30px;color:#000;transform:scaleX(0.9859);transform-origin:0 0;">Синтаксисы</div>
<div class="t " style="left:427.5px;top:20.95px;font-size:7.75px;line-height:9.30px;color:#000;transform:scaleX(1.0076);transform-origin:0 0;">Опции</div>
<div class="t " style="left:460px;top:20.95px;font-size:7.75px;line-height:9.30px;color:#000;transform:scaleX(0.9933);transform-origin:0 0;">Инструменты</div>
<div class="t " style="left:515.5px;top:20.95px;font-size:7.75px;line-height:9.30px;color:#000;transform:scaleX(1.0368);transform-origin:0 0;">Макросы</div>
<div class="t " style="left:556.5px;top:20.95px;font-size:7.75px;line-height:9.30px;color:#000;transform:scaleX(0.9900);transform-origin:0 0;">Запуск</div>
<div class="t " style="left:588px;top:20.95px;font-size:7.75px;line-height:9.30px;color:#000;transform:scaleX(1.0029);transform-origin:0 0;">Плагины</div>
<div class="t " style="left:627.5px;top:20.95px;font-size:7.75px;line-height:9.30px;color:#000;transform:scaleX(0.9757);transform-origin:0 0;">Вкладки</div>
<div class="t " style="left:664.5px;top:20.95px;font-size:7.75px;line-height:9.30px;color:#000;">?</div>
<div class="t " style="left:962px;top:20.60px;font-size:8px;line-height:9.60px;color:#000;">X</div>
<div class="r" style="left:216px;top:30.4px;width:754.6px;height:0.6px;background:#ececec;"></div>
<div class="r" style="left:216px;top:43.8px;width:754.6px;height:14.2px;background:#f0f0f0;"></div>
<div class="r" style="left:218px;top:46px;width:44.5px;height:10.8px;background:#c3c3c3;"></div>
<div class="r" style="left:265px;top:46px;width:37.7px;height:10.8px;background:#c3c3c3;"></div>
<div class="r" style="left:262.9px;top:45.5px;width:0.8px;height:11.8px;background:#9a9a9a;"></div>
<div class="r" style="left:303px;top:45.5px;width:0.8px;height:11.8px;background:#9a9a9a;"></div>
<div class="r" style="left:369.2px;top:45.2px;width:0.9px;height:12.5px;background:#8e8e8e;"></div>
<div class="r" style="left:304px;top:45px;width:65.2px;height:2.3px;background:#f3a01c;"></div>
<div class="r" style="left:304px;top:47.3px;width:65.2px;height:10.4px;background:#f3f3f3;"></div>
<div class="t " style="left:228px;top:48.06px;font-size:5.9px;line-height:7.08px;color:#8a8a8a;transform:scaleX(0.9912);transform-origin:0 0;">КОДЫ.sin</div>
<div class="t " style="left:274px;top:48.06px;font-size:5.9px;line-height:7.08px;color:#8a8a8a;transform:scaleX(0.9290);transform-origin:0 0;">para.sin</div>
<div class="t " style="left:314px;top:48.06px;font-size:5.9px;line-height:7.08px;color:#1a1a1a;transform:scaleX(0.9360);transform-origin:0 0;">steamvr.vrsettings</div>
<div class="r" style="left:217.6px;top:57.6px;width:751.0px;height:0.9px;background:#808080;"></div>
<div class="r" style="left:216.2px;top:58px;width:1.4px;height:411px;background:#2a2a2a;"></div>
<div class="r" style="left:217.7px;top:58.5px;width:30px;height:410.3px;background:#e4e4e4;"></div>
<div class="r" style="left:216px;top:469px;width:754.6px;height:13.6px;background:#f0f0f0;"></div>
<div class="r" style="left:216px;top:468.7px;width:754.6px;height:1.3px;background:#9c9c9c;"></div>
<div class="r" style="left:216px;top:470px;width:754.6px;height:0.8px;background:#fcfcfc;"></div>
<div class="t " style="left:217.5px;top:472.77px;font-size:7.55px;line-height:9.06px;color:#000;transform:scaleX(1.0626);transform-origin:0 0;">Normal text file</div>
<div class="t " style="left:586.5px;top:472.77px;font-size:7.55px;line-height:9.06px;color:#000;transform:scaleX(1.0272);transform-origin:0 0;">length : 3 856</div>
<div class="t " style="left:642px;top:472.77px;font-size:7.55px;line-height:9.06px;color:#000;transform:scaleX(0.9733);transform-origin:0 0;">lines : 144</div>
<div class="t " style="left:691.5px;top:472.77px;font-size:7.55px;line-height:9.06px;color:#000;transform:scaleX(0.9528);transform-origin:0 0;">Ln : 109</div>
<div class="t " style="left:725.5px;top:472.77px;font-size:7.55px;line-height:9.06px;color:#000;transform:scaleX(0.9624);transform-origin:0 0;">Col : 1</div>
<div class="t " style="left:755.5px;top:472.77px;font-size:7.55px;line-height:9.06px;color:#000;transform:scaleX(0.9694);transform-origin:0 0;">Sel : 554 | 15</div>
<div class="t " style="left:826.7px;top:472.77px;font-size:7.55px;line-height:9.06px;color:#000;transform:scaleX(0.9553);transform-origin:0 0;">Windows (CR LF</div>
<div class="t " style="left:883.8px;top:472.77px;font-size:7.55px;line-height:9.06px;color:#000;transform:scaleX(0.9584);transform-origin:0 0;">UTF-8</div>
<div class="t " style="left:946.5px;top:472.77px;font-size:7.55px;line-height:9.06px;color:#000;transform:scaleX(0.9137);transform-origin:0 0;">INS</div>
<div class="r" style="left:584.2px;top:471.3px;width:0.6px;height:10.5px;background:#d0d0d0;"></div>
<div class="r" style="left:687.4px;top:471.3px;width:0.6px;height:10.5px;background:#d0d0d0;"></div>
<div class="r" style="left:824px;top:471.3px;width:0.6px;height:10.5px;background:#d0d0d0;"></div>
<div class="r" style="left:881.8px;top:471.3px;width:0.6px;height:10.5px;background:#d0d0d0;"></div>
<div class="r" style="left:942px;top:471.3px;width:0.6px;height:10.5px;background:#d0d0d0;"></div>
<div class="r" style="left:216px;top:58.5px;width:744.6px;height:410.3px;overflow:hidden;">
<div class="r" style="left:56.19999999999999px;top:0.17px;width:0.7px;height:11.46px;background:#d4d4d4;"></div>
<div class="t m" style="left:32.19999999999999px;top:1.20px;font-size:9.558px;line-height:12px;color:#262626;">      &quot;motionSmoothingOverride&quot; : 3</div>
<div class="t" style="left:5.300000000000011px;width:16.9px;text-align:right;top:0.35px;font-size:9.3px;letter-spacing:0.3px;line-height:12px;color:#8a8a8a;">97</div>
<div class="t m" style="left:32.19999999999999px;top:12.66px;font-size:9.558px;line-height:12px;color:#262626;">   },</div>
<div class="t" style="left:5.300000000000011px;width:16.9px;text-align:right;top:11.81px;font-size:9.3px;letter-spacing:0.3px;line-height:12px;color:#8a8a8a;">98</div>
<div class="t m" style="left:32.19999999999999px;top:24.12px;font-size:9.558px;line-height:12px;color:#262626;">   &quot;steam.app.658920&quot; : {</div>
<div class="t" style="left:5.300000000000011px;width:16.9px;text-align:right;top:23.27px;font-size:9.3px;letter-spacing:0.3px;line-height:12px;color:#8a8a8a;">99</div>
<div class="r" style="left:56.19999999999999px;top:34.55px;width:0.7px;height:11.46px;background:#d4d4d4;"></div>
<div class="t m" style="left:32.19999999999999px;top:35.57px;font-size:9.558px;line-height:12px;color:#262626;">      &quot;DominantHand&quot; : 2,</div>
<div class="t" style="left:5.300000000000011px;width:16.9px;text-align:right;top:34.72px;font-size:9.3px;letter-spacing:0.3px;line-height:12px;color:#8a8a8a;">100</div>
<div class="r" style="left:56.19999999999999px;top:46.00px;width:0.7px;height:11.46px;background:#d4d4d4;"></div>
<div class="t m" style="left:32.19999999999999px;top:47.03px;font-size:9.558px;line-height:12px;color:#262626;">      &quot;motionSmoothingOverride&quot; : 3</div>
<div class="t" style="left:5.300000000000011px;width:16.9px;text-align:right;top:46.18px;font-size:9.3px;letter-spacing:0.3px;line-height:12px;color:#8a8a8a;">101</div>
<div class="t m" style="left:32.19999999999999px;top:58.49px;font-size:9.558px;line-height:12px;color:#262626;">   },</div>
<div class="t" style="left:5.300000000000011px;width:16.9px;text-align:right;top:57.64px;font-size:9.3px;letter-spacing:0.3px;line-height:12px;color:#8a8a8a;">102</div>
<div class="t m" style="left:32.19999999999999px;top:69.95px;font-size:9.558px;line-height:12px;color:#262626;">   &quot;steam.app.690790&quot; : {</div>
<div class="t" style="left:5.300000000000011px;width:16.9px;text-align:right;top:69.10px;font-size:9.3px;letter-spacing:0.3px;line-height:12px;color:#8a8a8a;">103</div>
<div class="r" style="left:56.19999999999999px;top:80.38px;width:0.7px;height:11.46px;background:#d4d4d4;"></div>
<div class="t m" style="left:32.19999999999999px;top:81.41px;font-size:9.558px;line-height:12px;color:#262626;">      &quot;motionSmoothingOverride&quot; : 3</div>
<div class="t" style="left:5.300000000000011px;width:16.9px;text-align:right;top:80.56px;font-size:9.3px;letter-spacing:0.3px;line-height:12px;color:#8a8a8a;">104</div>
<div class="t m" style="left:32.19999999999999px;top:92.87px;font-size:9.558px;line-height:12px;color:#262626;">   },</div>
<div class="t" style="left:5.300000000000011px;width:16.9px;text-align:right;top:92.02px;font-size:9.3px;letter-spacing:0.3px;line-height:12px;color:#8a8a8a;">105</div>
<div class="t m" style="left:32.19999999999999px;top:104.32px;font-size:9.558px;line-height:12px;color:#262626;">   &quot;steam.app.754530&quot; : {</div>
<div class="t" style="left:5.300000000000011px;width:16.9px;text-align:right;top:103.47px;font-size:9.3px;letter-spacing:0.3px;line-height:12px;color:#8a8a8a;">106</div>
<div class="r" style="left:56.19999999999999px;top:114.75px;width:0.7px;height:11.46px;background:#d4d4d4;"></div>
<div class="t m" style="left:32.19999999999999px;top:115.78px;font-size:9.558px;line-height:12px;color:#262626;">      &quot;motionSmoothingOverride&quot; : 3</div>
<div class="t" style="left:5.300000000000011px;width:16.9px;text-align:right;top:114.93px;font-size:9.3px;letter-spacing:0.3px;line-height:12px;color:#8a8a8a;">107</div>
<div class="t m" style="left:32.19999999999999px;top:127.24px;font-size:9.558px;line-height:12px;color:#262626;">   },</div>
<div class="t" style="left:5.300000000000011px;width:16.9px;text-align:right;top:126.39px;font-size:9.3px;letter-spacing:0.3px;line-height:12px;color:#8a8a8a;">108</div>
<div class="r" style="left:32.19999999999999px;top:137.67px;width:710.8px;height:11.46px;background:#e8e8ff;"></div>
<div class="r" style="left:32.19999999999999px;top:137.67px;width:97.50px;height:11.56px;background:#c0c0c0;"></div>
<div class="t m" style="left:32.19999999999999px;top:138.70px;font-size:9.558px;line-height:12px;color:#262626;">   &quot;steamvr&quot; : {</div>
<div class="t" style="left:5.300000000000011px;width:16.9px;text-align:right;top:137.85px;font-size:9.3px;letter-spacing:0.3px;line-height:12px;color:#8a8a8a;">109</div>
<div class="r" style="left:32.19999999999999px;top:149.13px;width:246.61px;height:11.56px;background:#c0c0c0;"></div>
<div class="r" style="left:56.19999999999999px;top:149.13px;width:0.7px;height:11.46px;background:#d4d4d4;"></div>
<div class="t m" style="left:32.19999999999999px;top:150.16px;font-size:9.558px;line-height:12px;color:#262626;">      &quot;allowSupersampleFiltering&quot; : false,</div>
<div class="t" style="left:5.300000000000011px;width:16.9px;text-align:right;top:149.31px;font-size:9.3px;letter-spacing:0.3px;line-height:12px;color:#8a8a8a;">110</div>
<div class="r" style="left:32.19999999999999px;top:160.59px;width:166.31px;height:11.56px;background:#c0c0c0;"></div>
<div class="r" style="left:56.19999999999999px;top:160.59px;width:0.7px;height:11.46px;background:#d4d4d4;"></div>
<div class="t m" style="left:32.19999999999999px;top:161.62px;font-size:9.558px;line-height:12px;color:#262626;">      &quot;disableAsync&quot; : true,</div>
<div class="t" style="left:5.300000000000011px;width:16.9px;text-align:right;top:160.77px;font-size:9.3px;letter-spacing:0.3px;line-height:12px;color:#8a8a8a;">111</div>
<div class="r" style="left:32.19999999999999px;top:172.05px;width:183.52px;height:11.56px;background:#c0c0c0;"></div>
<div class="r" style="left:56.19999999999999px;top:172.05px;width:0.7px;height:11.46px;background:#d4d4d4;"></div>
<div class="t m" style="left:32.19999999999999px;top:173.07px;font-size:9.558px;line-height:12px;color:#262626;">      &quot;doNotFadeToGrid&quot; : true,</div>
<div class="t" style="left:5.300000000000011px;width:16.9px;text-align:right;top:172.22px;font-size:9.3px;letter-spacing:0.3px;line-height:12px;color:#8a8a8a;">112</div>
<div class="r" style="left:32.19999999999999px;top:183.50px;width:177.78px;height:11.56px;background:#c0c0c0;"></div>
<div class="r" style="left:56.19999999999999px;top:183.50px;width:0.7px;height:11.46px;background:#d4d4d4;"></div>
<div class="t m" style="left:32.19999999999999px;top:184.53px;font-size:9.558px;line-height:12px;color:#262626;">      &quot;enableHomeApp&quot; : false,</div>
<div class="t" style="left:5.300000000000011px;width:16.9px;text-align:right;top:183.68px;font-size:9.3px;letter-spacing:0.3px;line-height:12px;color:#8a8a8a;">113</div>
<div class="r" style="left:32.19999999999999px;top:194.96px;width:229.40px;height:11.56px;background:#c0c0c0;"></div>
<div class="r" style="left:56.19999999999999px;top:194.96px;width:0.7px;height:11.46px;background:#d4d4d4;"></div>
<div class="t m" style="left:32.19999999999999px;top:195.99px;font-size:9.558px;line-height:12px;color:#262626;">      &quot;forceFadeOnBadTracking&quot; : false,</div>
<div class="t" style="left:5.300000000000011px;width:16.9px;text-align:right;top:195.14px;font-size:9.3px;letter-spacing:0.3px;line-height:12px;color:#8a8a8a;">114</div>
<div class="r" style="left:32.19999999999999px;top:206.42px;width:344.10px;height:11.56px;background:#c0c0c0;"></div>
<div class="r" style="left:56.19999999999999px;top:206.42px;width:0.7px;height:11.46px;background:#d4d4d4;"></div>
<div class="t m" style="left:32.19999999999999px;top:207.45px;font-size:9.558px;line-height:12px;color:#262626;">      &quot;haveStartedTutorialForNativeChaperoneDriver&quot; : true,</div>
<div class="t" style="left:5.300000000000011px;width:16.9px;text-align:right;top:206.60px;font-size:9.3px;letter-spacing:0.3px;line-height:12px;color:#8a8a8a;">115</div>
<div class="r" style="left:32.19999999999999px;top:217.88px;width:240.87px;height:11.56px;background:#c0c0c0;"></div>
<div class="r" style="left:56.19999999999999px;top:217.88px;width:0.7px;height:11.46px;background:#d4d4d4;"></div>
<div class="t m" style="left:32.19999999999999px;top:218.91px;font-size:9.558px;line-height:12px;color:#262626;">      &quot;installID&quot; : &quot;762549053395563913&quot;,</div>
<div class="t" style="left:5.300000000000011px;width:16.9px;text-align:right;top:218.06px;font-size:9.3px;letter-spacing:0.3px;line-height:12px;color:#8a8a8a;">116</div>
<div class="r" style="left:32.19999999999999px;top:229.34px;width:206.46px;height:11.56px;background:#c0c0c0;"></div>
<div class="r" style="left:56.19999999999999px;top:229.34px;width:0.7px;height:11.46px;background:#d4d4d4;"></div>
<div class="t m" style="left:32.19999999999999px;top:230.37px;font-size:9.558px;line-height:12px;color:#262626;">      &quot;ipd&quot; : 0.065000000000000002,</div>
<div class="t" style="left:5.300000000000011px;width:16.9px;text-align:right;top:229.52px;font-size:9.3px;letter-spacing:0.3px;line-height:12px;color:#8a8a8a;">117</div>
<div class="r" style="left:32.19999999999999px;top:240.80px;width:131.91px;height:11.56px;background:#c0c0c0;"></div>
<div class="r" style="left:56.19999999999999px;top:240.80px;width:0.7px;height:11.46px;background:#d4d4d4;"></div>
<div class="t m" style="left:32.19999999999999px;top:241.82px;font-size:9.558px;line-height:12px;color:#262626;">      &quot;ipdOffset&quot; : 0,</div>
<div class="t" style="left:5.300000000000011px;width:16.9px;text-align:right;top:240.97px;font-size:9.3px;letter-spacing:0.3px;line-height:12px;color:#8a8a8a;">118</div>
<div class="r" style="left:32.19999999999999px;top:252.25px;width:217.93px;height:11.56px;background:#c0c0c0;"></div>
<div class="r" style="left:56.19999999999999px;top:252.25px;width:0.7px;height:11.46px;background:#d4d4d4;"></div>
<div class="t m" style="left:32.19999999999999px;top:253.28px;font-size:9.558px;line-height:12px;color:#262626;">      &quot;lastVersionNotice&quot; : &quot;1.27.5&quot;,</div>
<div class="t" style="left:5.300000000000011px;width:16.9px;text-align:right;top:252.43px;font-size:9.3px;letter-spacing:0.3px;line-height:12px;color:#8a8a8a;">119</div>
<div class="r" style="left:32.19999999999999px;top:263.71px;width:263.81px;height:11.56px;background:#c0c0c0;"></div>
<div class="r" style="left:56.19999999999999px;top:263.71px;width:0.7px;height:11.46px;background:#d4d4d4;"></div>
<div class="t m" style="left:32.19999999999999px;top:264.74px;font-size:9.558px;line-height:12px;color:#262626;">      &quot;lastVersionNoticeDate&quot; : &quot;1693515365&quot;,</div>
<div class="t" style="left:5.300000000000011px;width:16.9px;text-align:right;top:263.89px;font-size:9.3px;letter-spacing:0.3px;line-height:12px;color:#8a8a8a;">120</div>
<div class="r" style="left:32.19999999999999px;top:275.17px;width:189.26px;height:11.56px;background:#c0c0c0;"></div>
<div class="r" style="left:56.19999999999999px;top:275.17px;width:0.7px;height:11.46px;background:#d4d4d4;"></div>
<div class="t m" style="left:32.19999999999999px;top:276.20px;font-size:9.558px;line-height:12px;color:#262626;">      &quot;motionSmoothing&quot; : false,</div>
<div class="t" style="left:5.300000000000011px;width:16.9px;text-align:right;top:275.35px;font-size:9.3px;letter-spacing:0.3px;line-height:12px;color:#8a8a8a;">121</div>
<div class="r" style="left:32.19999999999999px;top:286.63px;width:240.87px;height:11.56px;background:#c0c0c0;"></div>
<div class="r" style="left:56.19999999999999px;top:286.63px;width:0.7px;height:11.46px;background:#d4d4d4;"></div>
<div class="t m" style="left:32.19999999999999px;top:287.66px;font-size:9.558px;line-height:12px;color:#262626;">      &quot;supersampleManualOverride&quot; : true,</div>
<div class="t" style="left:5.300000000000011px;width:16.9px;text-align:right;top:286.81px;font-size:9.3px;letter-spacing:0.3px;line-height:12px;color:#8a8a8a;">122</div>
<div class="r" style="left:32.19999999999999px;top:298.09px;width:160.58px;height:11.56px;background:#c0c0c0;"></div>
<div class="r" style="left:56.19999999999999px;top:298.09px;width:0.7px;height:11.46px;background:#d4d4d4;"></div>
<div class="t m" style="left:32.19999999999999px;top:299.12px;font-size:9.558px;line-height:12px;color:#262626;">      &quot;supersampleScale&quot; : 1</div>
<div class="t" style="left:5.300000000000011px;width:16.9px;text-align:right;top:298.27px;font-size:9.3px;letter-spacing:0.3px;line-height:12px;color:#8a8a8a;">123</div>
<div class="t m" style="left:32.19999999999999px;top:310.57px;font-size:9.558px;line-height:12px;color:#262626;">   },</div>
<div class="t" style="left:5.300000000000011px;width:16.9px;text-align:right;top:309.72px;font-size:9.3px;letter-spacing:0.3px;line-height:12px;color:#8a8a8a;">124</div>
<div class="t m" style="left:32.19999999999999px;top:322.03px;font-size:9.558px;line-height:12px;color:#262626;">   &quot;system.generated.Il-2.exe&quot; : {</div>
<div class="t" style="left:5.300000000000011px;width:16.9px;text-align:right;top:321.18px;font-size:9.3px;letter-spacing:0.3px;line-height:12px;color:#8a8a8a;">125</div>
<div class="r" style="left:56.19999999999999px;top:332.46px;width:0.7px;height:11.46px;background:#d4d4d4;"></div>
<div class="t m" style="left:32.19999999999999px;top:333.49px;font-size:9.558px;line-height:12px;color:#262626;">      &quot;motionSmoothingOverride&quot; : 3</div>
<div class="t" style="left:5.300000000000011px;width:16.9px;text-align:right;top:332.64px;font-size:9.3px;letter-spacing:0.3px;line-height:12px;color:#8a8a8a;">126</div>
<div class="t m" style="left:32.19999999999999px;top:344.95px;font-size:9.558px;line-height:12px;color:#262626;">   },</div>
<div class="t" style="left:5.300000000000011px;width:16.9px;text-align:right;top:344.10px;font-size:9.3px;letter-spacing:0.3px;line-height:12px;color:#8a8a8a;">127</div>
<div class="t m" style="left:32.19999999999999px;top:356.41px;font-size:9.558px;line-height:12px;color:#262626;">   &quot;system.generated.Launcher64.exe&quot; : {</div>
<div class="t" style="left:5.300000000000011px;width:16.9px;text-align:right;top:355.56px;font-size:9.3px;letter-spacing:0.3px;line-height:12px;color:#8a8a8a;">128</div>
<div class="r" style="left:56.19999999999999px;top:366.84px;width:0.7px;height:11.46px;background:#d4d4d4;"></div>
<div class="t m" style="left:32.19999999999999px;top:367.87px;font-size:9.558px;line-height:12px;color:#262626;">      &quot;motionSmoothingOverride&quot; : 3</div>
<div class="t" style="left:5.300000000000011px;width:16.9px;text-align:right;top:367.02px;font-size:9.3px;letter-spacing:0.3px;line-height:12px;color:#8a8a8a;">129</div>
<div class="t m" style="left:32.19999999999999px;top:379.32px;font-size:9.558px;line-height:12px;color:#262626;">   },</div>
<div class="t" style="left:5.300000000000011px;width:16.9px;text-align:right;top:378.47px;font-size:9.3px;letter-spacing:0.3px;line-height:12px;color:#8a8a8a;">130</div>
<div class="t m" style="left:32.19999999999999px;top:390.78px;font-size:9.558px;line-height:12px;color:#262626;">   &quot;system.generated.crysis.exe&quot; : {</div>
<div class="t" style="left:5.300000000000011px;width:16.9px;text-align:right;top:389.93px;font-size:9.3px;letter-spacing:0.3px;line-height:12px;color:#8a8a8a;">131</div>
<div class="r" style="left:56.19999999999999px;top:401.21px;width:0.7px;height:11.46px;background:#d4d4d4;"></div>
<div class="t m" style="left:32.19999999999999px;top:402.24px;font-size:9.558px;line-height:12px;color:#262626;">      &quot;motionSmoothingOverride&quot; : 3</div>
<div class="t" style="left:5.300000000000011px;width:16.9px;text-align:right;top:401.39px;font-size:9.3px;letter-spacing:0.3px;line-height:12px;color:#8a8a8a;">132</div>
</div>
<div class="r" style="left:960.2px;top:58.5px;width:8.2px;height:410.3px;background:#f0f0f0;"></div>
<div class="r" style="left:960.4px;top:328.7px;width:7.8px;height:95.5px;background:#cdcdcd;"></div>
<div class="r" style="left:968.2px;top:44px;width:2.4px;height:438px;background:#f0f0f0;"></div>
<svg class="ov" width="1000" height="563" viewBox="0 0 1000 563" style="left:0;top:0;"><g transform="translate(220.00,6.30) scale(1.1)"><rect x="0.30" y="0.60" width="6.60" height="7.20" fill="#f4f4f4" rx="0.6"/><rect x="0.30" y="4.60" width="6.60" height="3.20" fill="#7ccb3b" rx="0.5"/><rect x="0.30" y="3.80" width="6.60" height="1.60" fill="#b9e28c" /><path d="M7.6,0.2 L8.3,0.9 L4.4,5.6 L3.4,5.9 L3.7,4.9 Z" fill="#f0a822" stroke="none" stroke-width="1" /><path d="M7.6,0.2 L8.3,0.9 L7.9,1.4 L7.2,0.7 Z" fill="#d8473a" stroke="none" stroke-width="1" /></g><rect x="908.00" y="11.20" width="6.20" height="0.80" fill="#fff" /><rect x="931.30" y="8.20" width="5.40" height="5.40" fill="none" stroke="#fff" stroke-width="0.8"/><path d="M955.8,8.2 L961.2,13.6 M961.2,8.2 L955.8,13.6" fill="none" stroke="#fff" stroke-width="0.8" /><path d="M962.3,65.3 l2.1,-2.1 l2.1,2.1" fill="none" stroke="#555" stroke-width="0.8" /><path d="M962.3,461.6 l2.1,2.1 l2.1,-2.1" fill="none" stroke="#555" stroke-width="0.8" /><rect x="967.50" y="480.30" width="1.00" height="1.00" fill="#b8b8b8" /><rect x="965.60" y="480.30" width="1.00" height="1.00" fill="#b8b8b8" /><rect x="967.50" y="478.40" width="1.00" height="1.00" fill="#b8b8b8" /><rect x="963.70" y="480.30" width="1.00" height="1.00" fill="#b8b8b8" /><rect x="967.50" y="476.50" width="1.00" height="1.00" fill="#b8b8b8" /><rect x="965.60" y="478.40" width="1.00" height="1.00" fill="#b8b8b8" /><path d="M220,33.0 h3.7199999999999998 l2.2800000000000002,2.4 v5.6 h-6 z" fill="#fbfbfb" stroke="#b4b4b4" stroke-width="0.5" /><circle cx="225.30" cy="39.60" r="1.90" fill="#3faa3f" /><path d="M224.2,39.6 h2.2 M225.3,38.5 v2.2" fill="none" stroke="#fff" stroke-width="0.6" /><rect x="234.50" y="32.80" width="4.80" height="5.40" fill="#7fb2ea" /><path d="M230.4,35.5 h3.2 l0.8,0.9 h4.8 v4.8 h-8.8 z" fill="#eeb540" stroke="none" stroke-width="1" /><path d="M230.4,38 h8.8 v3.2 h-8.8 z" fill="#f7d276" stroke="none" stroke-width="1" /><rect x="242.60" y="33.00" width="8.30" height="8.20" fill="#82878c" rx="0.6"/><rect x="244.20" y="33.00" width="5.00" height="3.00" fill="#e9e9e9" /><rect x="244.00" y="37.60" width="5.60" height="3.60" fill="#cfcfcf" /><rect x="244.80" y="38.60" width="4.00" height="0.70" fill="#777" /><rect x="256.40" y="33.40" width="6.40" height="6.20" fill="#a2a5a8" rx="0.5"/><rect x="254.60" y="35.00" width="6.60" height="6.20" fill="#8a8e92" rx="0.5"/><rect x="255.80" y="38.00" width="4.20" height="3.20" fill="#bdbdbd" /><path d="M267.3,33.0 h3.596 l2.2039999999999997,2.4 v5.6 h-5.8 z" fill="#fbfbfb" stroke="#b4b4b4" stroke-width="0.5" /><circle cx="273.00" cy="39.80" r="2.00" fill="#ec7a1e" /><path d="M272.1,39.8 h1.8" fill="none" stroke="#fff" stroke-width="0.7" /><path d="M278.4,33.0 h2.976 l1.8239999999999998,1.9799999999999998 v4.619999999999999 h-4.8 z" fill="#fbfbfb" stroke="#b4b4b4" stroke-width="0.5" /><path d="M280.4,34.2 h2.976 l1.8239999999999998,2.04 v4.76 h-4.8 z" fill="#fbfbfb" stroke="#b4b4b4" stroke-width="0.5" /><circle cx="285.00" cy="39.90" r="2.00" fill="#ec7a1e" /><path d="M284.1,39.9 h1.8" fill="none" stroke="#fff" stroke-width="0.7" /><rect x="291.80" y="33.00" width="5.60" height="3.00" fill="#7fb2ea" /><rect x="290.20" y="35.60" width="8.80" height="4.20" fill="#8d9296" rx="0.8"/><rect x="291.60" y="38.40" width="6.00" height="2.80" fill="#e4e8ec" /><rect x="291.20" y="36.60" width="6.80" height="0.80" fill="#c9ccd0" /><rect x="302.00" y="32.50" width="0.60" height="9.00" fill="#a0a0a0" /><path d="M308.6,33 L312.2,38.6 M313.2,33 L309.4,38.6" fill="none" stroke="#5a86c8" stroke-width="0.9" /><circle cx="308.80" cy="39.70" r="1.40" fill="none" stroke="#d63b3b" stroke-width="0.9"/><circle cx="312.20" cy="39.70" r="1.40" fill="none" stroke="#d63b3b" stroke-width="0.9"/><path d="M318.4,33 h3.6 l1.4,1.4 v4.4 h-5 z" fill="#c6daf5" stroke="#5d8fd6" stroke-width="0.6" /><path d="M321.6,35.6 h3.6 l1.4,1.4 v4.4 h-5 z" fill="#dbe8fa" stroke="#5d8fd6" stroke-width="0.6" /><rect x="330.40" y="33.40" width="6.60" height="7.60" fill="#c08a3a" rx="0.6"/><rect x="332.20" y="32.80" width="3.00" height="1.40" fill="#8a8a8a" /><path d="M333.6,36 h3.8 l1.4,1.4 v4 h-5.2 z" fill="#dbe8fa" stroke="#5d8fd6" stroke-width="0.6" /><rect x="342.40" y="32.50" width="0.60" height="9.00" fill="#a0a0a0" /><path d="M349.4,35.8 h3.2 q2.2,0 2.2,1.9 q0,1.9 -2.2,1.9 h-3.6" fill="none" stroke="#9a9a9a" stroke-width="1.7" /><path d="M350.2,33.4 v4.8 l-3.4,-2.4 z" fill="#9a9a9a" stroke="none" stroke-width="1" /><path d="M364.2,35.8 h-3.2 q-2.2,0 -2.2,1.9 q0,1.9 2.2,1.9 h3.6" fill="none" stroke="#9a9a9a" stroke-width="1.7" /><path d="M363.4,33.4 v4.8 l3.4,-2.4 z" fill="#9a9a9a" stroke="none" stroke-width="1" /><rect x="370.40" y="32.50" width="0.60" height="9.00" fill="#a0a0a0" /><rect x="375.20" y="35.60" width="3.40" height="4.60" fill="#3c4650" rx="0.6"/><rect x="379.40" y="35.60" width="3.40" height="4.60" fill="#3c4650" rx="0.6"/><rect x="376.00" y="34.00" width="2.00" height="2.00" fill="#5a646e" /><rect x="380.20" y="34.00" width="2.00" height="2.00" fill="#5a646e" /><rect x="378.20" y="36.40" width="1.60" height="1.60" fill="#6a7680" /><path d="M388,33.2 l1.4,3.4 h-2.8 z" fill="#3f86d8" stroke="none" stroke-width="1" /><rect x="390.20" y="36.60" width="5.00" height="4.40" fill="#3f86d8" rx="0.4"/><rect x="391.20" y="37.60" width="3.00" height="0.80" fill="#dbe8fa" /><rect x="391.20" y="39.20" width="3.00" height="0.80" fill="#dbe8fa" /><path d="M388.6,37.4 v2.6 h1.2" fill="none" stroke="#2a62b0" stroke-width="0.7" /><rect x="398.40" y="32.50" width="0.60" height="9.00" fill="#a0a0a0" /><circle cx="406.00" cy="36.20" r="2.80" fill="#dce9f7" stroke="#9db7d6" stroke-width="0.6"/><path d="M408.2,38.6 l2.6,2.6" fill="none" stroke="#b0783a" stroke-width="1.1" /><path d="M408,36.4 h3.4 M409.7,34.7 v3.4" fill="none" stroke="#2fa043" stroke-width="1.2" /><circle cx="418.00" cy="36.20" r="2.80" fill="#dce9f7" stroke="#9db7d6" stroke-width="0.6"/><path d="M420.2,38.6 l2.6,2.6" fill="none" stroke="#b0783a" stroke-width="1.1" /><path d="M419.6,36.4 h3.8" fill="none" stroke="#e0393c" stroke-width="1.3" /><rect x="426.40" y="32.50" width="0.60" height="9.00" fill="#a0a0a0" /><rect x="431.20" y="33.20" width="7.40" height="6.20" fill="#eef4fb" stroke="#4f86d2" stroke-width="0.6"/><rect x="431.20" y="33.20" width="7.40" height="1.20" fill="#4f86d2" /><rect x="435.40" y="37.60" width="4.40" height="3.60" fill="#f0b83a" rx="0.4"/><path d="M436.4,37.6 v-1 q1.2,-1.2 2.4,0 v1" fill="none" stroke="#c9952a" stroke-width="0.6" /><rect x="443.20" y="33.20" width="7.40" height="6.20" fill="#eef4fb" stroke="#4f86d2" stroke-width="0.6"/><rect x="443.20" y="33.20" width="7.40" height="1.20" fill="#4f86d2" /><rect x="447.40" y="37.60" width="4.40" height="3.60" fill="#f0b83a" rx="0.4"/><path d="M448.4,37.6 v-1 q1.2,-1.2 2.4,0 v1" fill="none" stroke="#c9952a" stroke-width="0.6" /><rect x="434.60" y="34.40" width="0.60" height="5.00" fill="#4f86d2" /><rect x="443.20" y="36.40" width="7.40" height="0.60" fill="#4f86d2" /><rect x="454.80" y="32.50" width="0.60" height="9.00" fill="#a0a0a0" /><rect x="459.60" y="34.20" width="4.20" height="1.60" fill="#5a6068" /><path d="M459.6,37.4 h7 q1.6,0.2 1.6,1.6 q0,1.4 -1.6,1.6 h-5" fill="none" stroke="#3f86d8" stroke-width="0.9" /><path d="M462.4,40.6 l1.6,-1.2 v2.4 z" fill="#3f86d8" stroke="none" stroke-width="1" /><text x="472.4" y="40.2" font-size="8.2" fill="#2f7be0" font-family="Liberation Sans">¶</text><rect x="482.00" y="31.80" width="11.80" height="10.40" fill="#cce4f9" stroke="#98c8ee" stroke-width="0.6"/><path d="M486.3,33.2 v8" fill="none" stroke="#1c3fe0" stroke-width="0.8" stroke-dasharray="1 0.6"/><rect x="487.40" y="33.60" width="4.60" height="1.00" fill="#1c3fe0" /><rect x="487.40" y="35.60" width="3.60" height="1.00" fill="#1c3fe0" /><path d="M484.8,38.4 h6.4 l-1.2,-1.4 M491.2,38.4 l-1.2,1.4" fill="none" stroke="#1c3fe0" stroke-width="0.9" /><rect x="487.40" y="39.80" width="2.40" height="0.90" fill="#1c3fe0" /><rect x="495.60" y="33.60" width="7.60" height="6.40" fill="#dfeaf8" stroke="#4f86d2" stroke-width="0.6"/><rect x="495.60" y="33.60" width="7.60" height="1.30" fill="#4f86d2" /><path d="M497.6,39.8 l2.6,-3.4 l0.8,1.2 l1.6,-1 l-1.4,3.6 z" fill="#efb735" stroke="none" stroke-width="1" /><rect x="507.40" y="33.00" width="8.40" height="8.20" fill="#d9c23a" stroke="#8c8c8c" stroke-width="0.8" rx="0.6"/><path d="M508,33.6 h3.4 l1,7.2 h-4.4 z" fill="#7cc06a" stroke="none" stroke-width="1" /><path d="M511,33.6 l3.6,7" fill="none" stroke="#d8552a" stroke-width="0.7" /><path d="M520,33.0 h4.092 l2.508,2.4 v5.6 h-6.6 z" fill="#fbfbfb" stroke="#b4b4b4" stroke-width="0.5" /><path d="M520,40.6 q2.6,-1.8 3.4,-4.6 q0.6,-2.2 2.2,-1.8 M521.6,37.4 h3.2" fill="none" stroke="#dc2f2f" stroke-width="1.0" /><path d="M531.4,34.6 h2.8 l0.8,0.9 h4.6 v5.4 h-8.2 z" fill="#f0c3c3" stroke="none" stroke-width="1" /><rect x="531.40" y="37.00" width="8.20" height="0.70" fill="#e49a9a" /><ellipse cx="547.6" cy="37" rx="4.4" ry="2.6" fill="#f7f1e6" stroke="#d69a52" stroke-width="0.7"/><circle cx="547.60" cy="37.00" r="1.70" fill="#3f78c8" /><circle cx="547.60" cy="37.00" r="0.70" fill="#1a2d50" /><rect x="554.60" y="32.50" width="0.60" height="9.00" fill="#a0a0a0" /><rect x="560.20" y="33.20" width="7.00" height="7.60" fill="#f4f4f4" stroke="#9a9a9a" stroke-width="0.6"/><circle cx="563.70" cy="37.00" r="1.70" fill="#e01818" /><rect x="571.80" y="33.20" width="7.00" height="7.60" fill="#f4f4f4" stroke="#9a9a9a" stroke-width="0.6"/><rect x="573.60" y="35.30" width="3.40" height="3.40" fill="#8c8c8c" /><rect x="584.00" y="33.20" width="7.00" height="7.60" fill="#f4f4f4" stroke="#9a9a9a" stroke-width="0.6"/><path d="M586.4,35 v4 l2.6,-2 z" fill="#8c8c8c" stroke="none" stroke-width="1" /><rect x="595.80" y="33.20" width="7.00" height="7.60" fill="#f4f4f4" stroke="#9a9a9a" stroke-width="0.6"/><path d="M597,35 v4 l2.4,-2 z M599.6,35 v4 l2.4,-2 z" fill="#2f6fd6" stroke="none" stroke-width="1" /><rect x="607.40" y="33.20" width="6.40" height="6.00" fill="#9a9da0" /><rect x="609.40" y="35.20" width="6.60" height="6.00" fill="#7b7f83" /><rect x="610.60" y="38.40" width="4.00" height="2.80" fill="#cfcfcf" /><rect x="618.80" y="32.50" width="0.60" height="9.00" fill="#a0a0a0" /><rect x="624.20" y="34.20" width="7.40" height="1.10" fill="#2f6fd6" /><path d="M624.8,35.3 h6.2 l-3.1,2 z" fill="#4f8fe8" stroke="none" stroke-width="1" /><path d="M624.8,39 h6.2 l-3.1,-2 z" fill="#4f8fe8" stroke="none" stroke-width="1" /><rect x="624.20" y="39.00" width="7.40" height="1.10" fill="#2f6fd6" /><path d="M636.2,38.7 h7 l-3.5,-3.6 z" fill="#4f8fe8" stroke="none" stroke-width="1" /><path d="M647.8,35.2 h7 l-3.5,3.6 z" fill="#4f8fe8" stroke="none" stroke-width="1" /><rect x="659.60" y="34.20" width="7.40" height="1.10" fill="#2f6fd6" /><path d="M660.2,35.3 h6.2 l-3.1,2 z" fill="#4f8fe8" stroke="none" stroke-width="1" /><path d="M660.2,39 h6.2 l-3.1,-2 z" fill="#4f8fe8" stroke="none" stroke-width="1" /><rect x="659.60" y="39.00" width="7.40" height="1.10" fill="#2f6fd6" /><rect x="219.20" y="48.60" width="6.30" height="6.40" fill="#3f8fe0" rx="0.5"/><rect x="220.40" y="48.60" width="3.80" height="2.30" fill="#dfeaf8" /><rect x="220.30" y="52.80" width="4.10" height="2.20" fill="#9ccf6a" /><rect x="266.10" y="48.60" width="6.30" height="6.40" fill="#3f8fe0" rx="0.5"/><rect x="267.30" y="48.60" width="3.80" height="2.30" fill="#dfeaf8" /><rect x="267.20" y="52.80" width="4.10" height="2.20" fill="#9ccf6a" /><rect x="306.10" y="48.60" width="6.30" height="6.40" fill="#3f8fe0" rx="0.5"/><rect x="307.30" y="48.60" width="3.80" height="2.30" fill="#dfeaf8" /><rect x="307.20" y="52.80" width="4.10" height="2.20" fill="#9ccf6a" /><rect x="256.20" y="49.00" width="5.40" height="5.60" fill="#dcdcdc" stroke="#9a9a9a" stroke-width="0.7" rx="0.3"/><path d="M257.59999999999997,50.5 l2.6,2.6 M260.2,50.5 l-2.6,2.6" fill="none" stroke="#9a9a9a" stroke-width="0.8" /><rect x="296.20" y="49.00" width="5.40" height="5.60" fill="#dcdcdc" stroke="#9a9a9a" stroke-width="0.7" rx="0.3"/><path d="M297.59999999999997,50.5 l2.6,2.6 M300.2,50.5 l-2.6,2.6" fill="none" stroke="#9a9a9a" stroke-width="0.8" /><rect x="361.40" y="49.10" width="5.40" height="5.60" fill="#f6eef2" stroke="#a03a72" stroke-width="0.7" rx="0.3"/><path d="M362.79999999999995,50.6 l2.6,2.6 M365.4,50.6 l-2.6,2.6" fill="none" stroke="#a03a72" stroke-width="0.8" /></svg>
<div class="r" style="left:0px;top:547.3px;width:1000px;height:15.7px;background:#0b0d10;"></div>
<div class="r" style="left:309px;top:547.3px;width:18.6px;height:15.7px;background:#363839;"></div>
<div class="r" style="left:41px;top:562px;width:15px;height:1px;background:#9fc3e6;"></div>
<div class="r" style="left:234px;top:562px;width:14px;height:1px;background:#9fc3e6;"></div>
<div class="r" style="left:253px;top:562px;width:14.5px;height:1px;background:#9fc3e6;"></div>
<div class="r" style="left:272px;top:562px;width:15px;height:1px;background:#9fc3e6;"></div>
<div class="r" style="left:291.5px;top:562px;width:14.5px;height:1px;background:#9fc3e6;"></div>
<div class="r" style="left:309px;top:562px;width:18.600000000000023px;height:1px;background:#9fc3e6;"></div>
<div class="t " style="left:831px;top:548.26px;font-size:5.9px;line-height:7.08px;color:#fff;transform:scaleX(0.9772);transform-origin:0 0;">22,3 KB/s</div>
<div class="t " style="left:834px;top:555.16px;font-size:5.9px;line-height:7.08px;color:#fff;transform:scaleX(0.9865);transform-origin:0 0;">0,2 KB/s</div>
<div class="t " style="left:937px;top:551.92px;font-size:6.3px;line-height:7.56px;color:#fff;transform:scaleX(0.9116);transform-origin:0 0;">РУС</div>
<div class="t " style="left:956.5px;top:551.92px;font-size:6.3px;line-height:7.56px;color:#fff;transform:scaleX(0.9379);transform-origin:0 0;">0:09</div>
<div class="t " style="left:898px;top:551.86px;font-size:6.9px;line-height:8.28px;color:#fff;transform:scaleX(0.9772);transform-origin:0 0;">36</div>
<div class="t " style="left:885.7px;top:551.86px;font-size:6.9px;line-height:8.28px;color:#22dd3c;transform:scaleX(1.0163);transform-origin:0 0;font-weight:bold;">30</div>
<svg class="ov" width="1000" height="563" viewBox="0 0 1000 563" style="left:0;top:0;"><path d="M5,552.4 l3.6,-0.6 v3.4 h-3.6 z M9.2,551.7 l4.4,-0.7 v4.2 h-4.4 z M5,555.8 h3.6 v3.4 l-3.6,-0.6 z M9.2,555.8 h4.4 v4.2 l-4.4,-0.7 z" fill="#fff" stroke="none" stroke-width="1" /><circle cx="30.00" cy="553.80" r="2.70" fill="none" stroke="#fff" stroke-width="0.9"/><path d="M28,556 l-3.6,3.4" fill="none" stroke="#fff" stroke-width="1.0" /><path d="M44.2,551.2 h3.2 l1,1 h4.8 v6.6 h-9 z" fill="#f2c445" stroke="none" stroke-width="1" /><path d="M44.2,553.4 h9 v5.4 h-9 z" fill="#f9dc7a" stroke="none" stroke-width="1" /><rect x="45.80" y="555.60" width="5.80" height="3.20" fill="#3a8be0" /><rect x="47.20" y="557.00" width="3.00" height="1.80" fill="#f9dc7a" /><rect x="64.40" y="551.20" width="6.60" height="8.40" fill="#4b8fd6" rx="0.5"/><rect x="65.40" y="552.20" width="4.60" height="6.40" fill="#a9cdf2" /><rect x="65.40" y="552.20" width="4.60" height="1.20" fill="#e0a040" /><circle cx="86.60" cy="554.40" r="2.80" fill="none" stroke="#7fb6ea" stroke-width="1.4"/><circle cx="89.60" cy="557.60" r="1.30" fill="none" stroke="#7fb6ea" stroke-width="0.7"/><path d="M102.6,555.2 l3.6,-2.6 h4.6 l-3.4,2.8 z" fill="#f0f0f0" stroke="none" stroke-width="1" /><path d="M102.6,555.2 l4.6,0.2 l3.6,-2.8 v1.8 l-3.6,3 l-4.6,-0.4 z" fill="#c9c9c9" stroke="none" stroke-width="1" /><path d="M121,553.6 h8.4 v5.8 h-8.4 z" fill="#f4f4f4" stroke="none" stroke-width="1" /><path d="M123.4,553.6 q0,-2.4 1.8,-2.4 q1.8,0 1.8,2.4" fill="none" stroke="#f4f4f4" stroke-width="0.7" /><rect x="123.40" y="555.00" width="1.60" height="1.50" fill="#e8452c" /><rect x="125.40" y="555.00" width="1.60" height="1.50" fill="#7bc043" /><rect x="123.40" y="556.90" width="1.60" height="1.50" fill="#2f9be8" /><rect x="125.40" y="556.90" width="1.60" height="1.50" fill="#f5b81c" /><rect x="140.60" y="551.20" width="7.40" height="8.00" fill="#8c8c8c" rx="0.4"/><rect x="141.60" y="553.20" width="1.80" height="5.40" fill="#d6302c" /><rect x="143.50" y="552.20" width="1.80" height="6.40" fill="#e8c41c" /><rect x="145.40" y="554.00" width="1.80" height="4.60" fill="#3fae3f" /><circle cx="164.00" cy="555.20" r="3.20" fill="none" stroke="#2f8be6" stroke-width="1.7"/><path d="M164,552 a3.2,3.2 0 0 1 3.1,2.4" fill="none" stroke="#4cc04a" stroke-width="1.7" /><path d="M161.4,557.4 a3.2,3.2 0 0 0 5.2,0" fill="none" stroke="#e8701c" stroke-width="1.7" /><circle cx="164.00" cy="555.20" r="1.20" fill="#111" /><circle cx="183.30" cy="555.30" r="4.20" fill="#1f3f7e" /><circle cx="183.30" cy="555.30" r="2.70" fill="#6f93d6" /><circle cx="183.30" cy="551.60" r="0.80" fill="#9fc0f0" /><path d="M199.6,558.8 q-0.6,-4.4 1.4,-6 q0.8,-0.6 1.6,0.2 h0.8 q0.8,-0.8 1.6,-0.2 q2,1.6 1.4,6 q-0.8,0.6 -1.4,-0.6 l-0.8,-1.6 h-2.4 l-0.8,1.6 q-0.6,1.2 -1.4,0.6 z" fill="#e8e8e8" stroke="none" stroke-width="1" /><path d="M218,552 l2.4,0.2 l5,6.4 l-1.2,0.4 l-3,-2.8 l-0.6,2.6 l-1,-0.2 l0.2,-3.6 l-2.6,-1.6 z" fill="#f0f0f0" stroke="none" stroke-width="1" /><path d="M220.6,555 l4.4,-2.4 l0.6,0.8 l-3.6,3 z" fill="#e0e0e0" stroke="none" stroke-width="1" /><ellipse cx="241" cy="555.3" rx="3.0" ry="3.7" fill="none" stroke="#e8e8e8" stroke-width="1.6"/><path d="M238.6,552.6 a3.0,3.7 0 0 0 0,5.4" fill="none" stroke="#e0242c" stroke-width="1.7" /><ellipse cx="260.4" cy="555.3" rx="3.0" ry="3.6" fill="none" stroke="#ee1c2c" stroke-width="2.2"/><rect x="275.00" y="551.80" width="9.00" height="6.80" fill="#2f9be8" /><rect x="276.00" y="553.00" width="3.00" height="4.60" fill="#bfe2fa" /><rect x="279.60" y="553.00" width="3.60" height="2.40" fill="#7fc4f4" /><rect x="277.00" y="554.00" width="1.20" height="2.20" fill="#e8c41c" /><rect x="295.60" y="551.60" width="7.60" height="5.40" fill="#e8eef4" /><rect x="296.40" y="552.40" width="6.00" height="3.80" fill="#6faee8" /><rect x="294.60" y="555.40" width="3.40" height="3.60" fill="#dfe6ec" /><rect x="298.40" y="557.00" width="2.00" height="1.80" fill="#c8d0d8" /><g transform="translate(313.60,550.80) scale(1.075)"><rect x="0.30" y="0.60" width="6.60" height="7.20" fill="#f4f4f4" rx="0.6"/><rect x="0.30" y="4.60" width="6.60" height="3.20" fill="#7ccb3b" rx="0.5"/><rect x="0.30" y="3.80" width="6.60" height="1.60" fill="#b9e28c" /><path d="M7.6,0.2 L8.3,0.9 L4.4,5.6 L3.4,5.9 L3.7,4.9 Z" fill="#f0a822" stroke="none" stroke-width="1" /><path d="M7.6,0.2 L8.3,0.9 L7.9,1.4 L7.2,0.7 Z" fill="#d8473a" stroke="none" stroke-width="1" /></g><path d="M813,548.4 v2.6 h1.9 l-2.9,2.8 l-2.9,-2.8 h1.9 v-2.6 z" fill="#e0e0e0" stroke="none" stroke-width="1" /><path d="M813,561.2 v-2.6 h1.9 l-2.9,-2.8 l-2.9,2.8 h1.9 v2.6 z" fill="#e0e0e0" stroke="none" stroke-width="1" /><path d="M861.2,556.8 l3.4,-3.2 l3.4,3.2" fill="none" stroke="#fff" stroke-width="0.8" /><rect x="873.00" y="551.00" width="8.40" height="8.00" fill="#a8a8a8" /><text x="874" y="557.4" font-size="5.6" fill="#fff" font-family="Liberation Sans">Ru</text><path d="M910.4,554.2 h1.4 l2,-1.8 v6 l-2,-1.8 h-1.4 z" fill="none" stroke="#fff" stroke-width="0.7" /><path d="M915.4,553.6 q1.2,1.8 0,3.6 M916.8,552.6 q2,2.8 0,5.6" fill="none" stroke="#fff" stroke-width="0.6" /><rect x="924.80" y="552.40" width="6.80" height="4.80" fill="none" stroke="#fff" stroke-width="0.8"/><path d="M926.6,559 h3.2 M928.2,557.2 v1.8" fill="none" stroke="#fff" stroke-width="0.8" /><rect x="923.40" y="551.80" width="2.40" height="3.20" fill="#fff" /><path d="M978.6,551.4 h8.2 v6 h-3.2 l-0.9,1.2 l-0.9,-1.2 h-3.2 z" fill="none" stroke="#fff" stroke-width="0.8" /><rect x="996.60" y="547.30" width="0.70" height="15.70" fill="#5a5a5a" /><rect x="997.30" y="547.30" width="2.70" height="15.70" fill="#14171b" /></svg>
</body></html>
